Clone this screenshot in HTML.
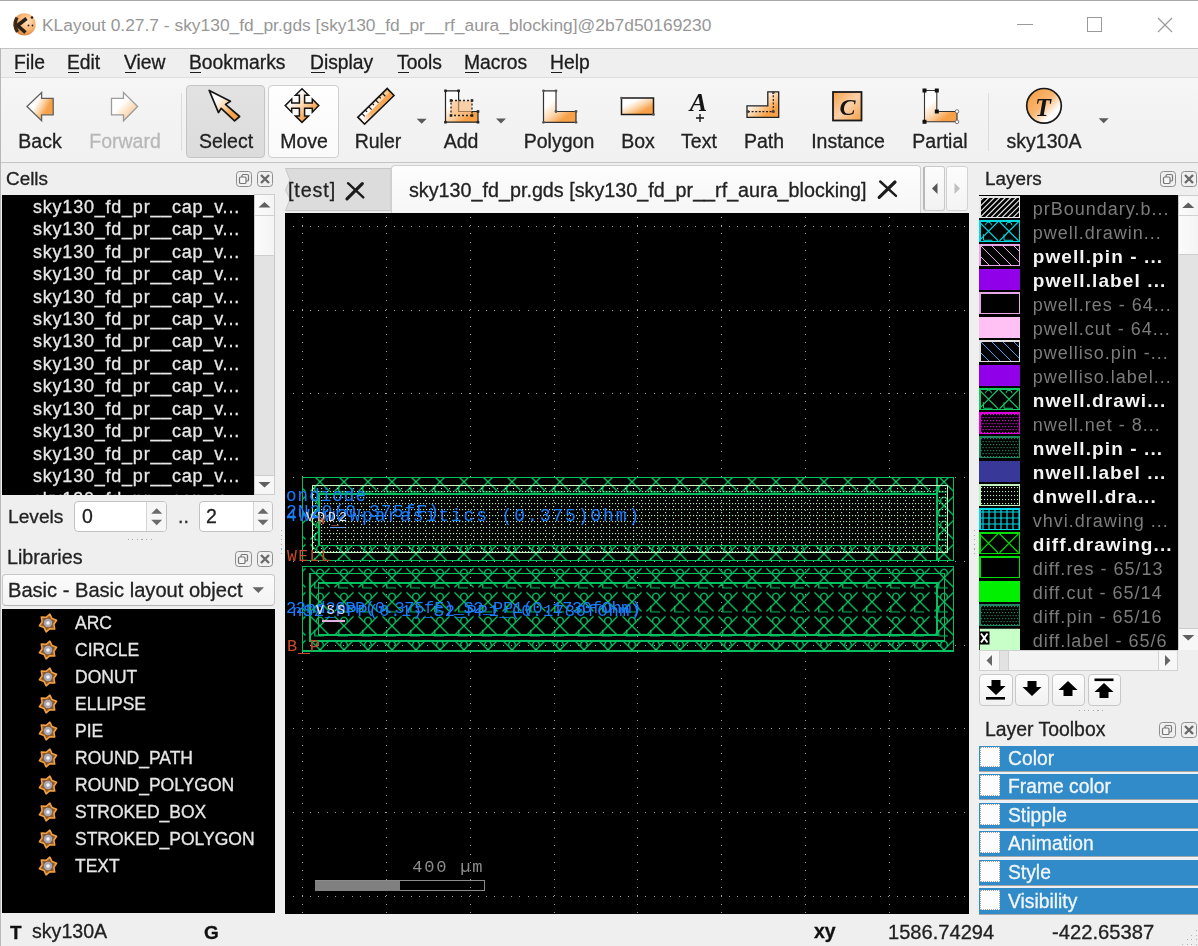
<!DOCTYPE html><html><head><meta charset="utf-8"><style>
html,body{margin:0;padding:0} body{width:1198px;height:946px;position:relative;overflow:hidden;background:#efefef;font-family:'Liberation Sans',sans-serif}
.a{position:absolute;box-sizing:border-box}
.t{position:absolute;white-space:pre;line-height:1;will-change:transform;-webkit-text-stroke:0.3px currentColor}
.sp{will-change:auto}
svg{position:absolute;overflow:visible;will-change:transform}
</style></head><body>
<div class="a" style="left:0px;top:0px;width:1198px;height:48px;background:#ffffff"></div>
<div class="a" style="left:0px;top:0px;width:1198px;height:1px;background:#a9a9a9"></div>
<div class="a" style="left:0px;top:48px;width:1198px;height:1px;background:#c4c4c4"></div>
<svg style="left:0;top:0" width="1" height="1">
<defs><radialGradient id="kball" cx="0.62" cy="0.38" r="0.7"><stop offset="0" stop-color="#ffe2c0"/><stop offset="0.55" stop-color="#f8b270"/><stop offset="1" stop-color="#d07a30"/></radialGradient></defs>
<circle cx="24.5" cy="24.4" r="11.2" fill="url(#kball)"/>
<path d="M26.5,18.5 L17.5,25.5 L25.5,32.5" fill="none" stroke="#2a2018" stroke-width="3.6" stroke-linejoin="round"/>
<path d="M17,17.5 Q13.2,24.5 17.5,32" fill="none" stroke="#3a2a1c" stroke-width="3.4"/>
<circle cx="32" cy="17.5" r="1.3" fill="#2a2018"/><circle cx="28.5" cy="25.5" r="0.9" fill="#2a2018"/><circle cx="32.5" cy="25.5" r="0.9" fill="#2a2018"/>
</svg>
<div class="t" style="left:42.0px;top:16.6px;font-size:17.4px;color:#979797;font-weight:400;letter-spacing:0px;will-change:auto;-webkit-text-stroke:0">KLayout 0.27.7 - sky130_fd_pr.gds [sky130_fd_pr__rf_aura_blocking]@2b7d50169230</div>
<div class="a" style="left:1017px;top:24px;width:16px;height:1px;background:#9a9a9a"></div>
<div class="a" style="left:1087px;top:17px;width:15px;height:15px;border:1.4px solid #9a9a9a"></div>
<svg style="left:1157px;top:17px" width="16" height="16" viewBox="0 0 16 16"><path d="M1 1 L15 15 M15 1 L1 15" stroke="#9a9a9a" stroke-width="1.2"/></svg>
<div class="a" style="left:0px;top:49px;width:1198px;height:28px;background:#efefef"></div>
<div class="a" style="left:0px;top:77px;width:1198px;height:1px;background:#dddddd"></div>
<div class="t" style="left:14.0px;top:52.5px;font-size:19.3px;color:#1c1c1c;font-weight:400;letter-spacing:0px;">File</div>
<div class="a" style="left:15.0px;top:71.5px;width:11px;height:1.6px;background:#1c1c1c"></div>
<div class="t" style="left:66.6px;top:52.5px;font-size:19.3px;color:#1c1c1c;font-weight:400;letter-spacing:0px;">Edit</div>
<div class="a" style="left:67.6px;top:71.5px;width:11px;height:1.6px;background:#1c1c1c"></div>
<div class="t" style="left:123.5px;top:52.5px;font-size:19.3px;color:#1c1c1c;font-weight:400;letter-spacing:0px;">View</div>
<div class="a" style="left:124.5px;top:71.5px;width:11px;height:1.6px;background:#1c1c1c"></div>
<div class="t" style="left:188.6px;top:52.5px;font-size:19.3px;color:#1c1c1c;font-weight:400;letter-spacing:0px;">Bookmarks</div>
<div class="a" style="left:189.6px;top:71.5px;width:11px;height:1.6px;background:#1c1c1c"></div>
<div class="t" style="left:310.3px;top:52.5px;font-size:19.3px;color:#1c1c1c;font-weight:400;letter-spacing:0px;">Display</div>
<div class="a" style="left:311.3px;top:71.5px;width:14px;height:1.6px;background:#1c1c1c"></div>
<div class="t" style="left:396.7px;top:52.5px;font-size:19.3px;color:#1c1c1c;font-weight:400;letter-spacing:0px;">Tools</div>
<div class="a" style="left:397.7px;top:71.5px;width:11px;height:1.6px;background:#1c1c1c"></div>
<div class="t" style="left:464.3px;top:52.5px;font-size:19.3px;color:#1c1c1c;font-weight:400;letter-spacing:0px;">Macros</div>
<div class="a" style="left:465.3px;top:71.5px;width:14px;height:1.6px;background:#1c1c1c"></div>
<div class="t" style="left:550.2px;top:52.5px;font-size:19.3px;color:#1c1c1c;font-weight:400;letter-spacing:0px;">Help</div>
<div class="a" style="left:551.2px;top:71.5px;width:11px;height:1.6px;background:#1c1c1c"></div>
<div class="a" style="left:0px;top:78px;width:1198px;height:84px;background:linear-gradient(#f6f6f6,#f3f3f3 40%,#f1f1f1)"></div>
<div class="a" style="left:0px;top:162px;width:1198px;height:1px;background:#c6c6c6"></div>
<div class="a" style="left:186px;top:84.5px;width:78.5px;height:73.5px;background:linear-gradient(#e2e2e2,#dcdcdc);border:1px solid #c4c4c4;border-radius:4px"></div>
<div class="a" style="left:267.5px;top:84.5px;width:71.5px;height:73.5px;background:linear-gradient(#fefefe,#fafafa);border:1px solid #cfcfcf;border-radius:4px"></div>
<div class="a" style="left:181px;top:93px;width:1px;height:58px;background:#dcdcdc"></div>
<div class="a" style="left:988px;top:93px;width:1px;height:58px;background:#dcdcdc"></div>
<svg style="left:0;top:0" width="1198" height="170" viewBox="0 0 1198 170"><defs><linearGradient id="gBack" x1="0.1" y1="0.2" x2="1" y2="0.7"><stop offset="0" stop-color="#ffffff"/><stop offset="0.28" stop-color="#ffffff"/><stop offset="0.5" stop-color="#fcd8b0"/><stop offset="0.75" stop-color="#f7a048"/><stop offset="1" stop-color="#f7a048"/></linearGradient><linearGradient id="gFwd" x1="0" y1="0" x2="1" y2="1"><stop offset="0" stop-color="#ffffff"/><stop offset="0.39" stop-color="#ffffff"/><stop offset="0.7" stop-color="#fcd8b0"/><stop offset="0.95" stop-color="#d8d8d8"/><stop offset="1" stop-color="#d8d8d8"/></linearGradient><linearGradient id="gO" x1="0" y1="0" x2="1" y2="1"><stop offset="0" stop-color="#ffffff"/><stop offset="0.28" stop-color="#ffffff"/><stop offset="0.5" stop-color="#fcd8b0"/><stop offset="0.75" stop-color="#f7a048"/><stop offset="1" stop-color="#f7a048"/></linearGradient><linearGradient id="gO2" x1="0" y1="0" x2="0.8" y2="1"><stop offset="0" stop-color="#ffffff"/><stop offset="0.33" stop-color="#ffffff"/><stop offset="0.6" stop-color="#fcd8b0"/><stop offset="0.85" stop-color="#f7a048"/><stop offset="1" stop-color="#f7a048"/></linearGradient><linearGradient id="gT" x1="0.1" y1="0.1" x2="0.9" y2="0.9"><stop offset="0" stop-color="#f7a048"/><stop offset="0.45" stop-color="#f9b570"/><stop offset="0.8" stop-color="#ffffff"/><stop offset="1" stop-color="#ffffff"/></linearGradient></defs><path d="M27,106.5 L41.6,92.5 L41.6,98.3 L53.2,98.3 L53.2,114.8 L41.6,114.8 L41.6,120.8 Z" fill="url(#gBack)" stroke="#606060" stroke-width="1.3" stroke-linejoin="miter"/><path d="M137.6,106.5 L123.5,92.5 L123.5,98.3 L111.5,98.3 L111.5,114.8 L123.5,114.8 L123.5,120.8 Z" fill="url(#gFwd)" stroke="#9c9c9c" stroke-width="1.3"/><path d="M209.2,90.4 L230.4,101.3 L225.5,104.4 L239.6,116.5 L234.6,120.8 L221.2,108.3 L218.5,112.6 Z" fill="url(#gO)" stroke="#151515" stroke-width="1.7" stroke-linejoin="round"/><path d="M302,88.8 L308.6,95.3 L304.6,95.3 L304.6,103.0 L312.3,103.0 L312.3,99.0 L318.8,105.6 L312.3,112.19999999999999 L312.3,108.19999999999999 L304.6,108.19999999999999 L304.6,115.89999999999999 L308.6,115.89999999999999 L302,122.39999999999999 L295.4,115.89999999999999 L299.4,115.89999999999999 L299.4,108.19999999999999 L291.7,108.19999999999999 L291.7,112.19999999999999 L285.2,105.6 L291.7,99.0 L291.7,103.0 L299.4,103.0 L299.4,95.3 L295.4,95.3 Z" fill="url(#gO)" stroke="#151515" stroke-width="1.5" stroke-linejoin="miter"/><g transform="translate(375.9,106.3) rotate(-44.3)"><rect x="-20.5" y="-4.8" width="41" height="9.6" fill="url(#gRul)" stroke="#151515" stroke-width="1.7"/><rect x="-19.6" y="-0.2" width="39.2" height="4.2" fill="url(#gRul2)"/><line x1="-15.0" y1="-4.8" x2="-15.0" y2="-0.5999999999999996" stroke="#151515" stroke-width="1.2"/><line x1="-10.2" y1="-4.8" x2="-10.2" y2="-2.1999999999999997" stroke="#151515" stroke-width="1.2"/><line x1="-5.4" y1="-4.8" x2="-5.4" y2="-0.5999999999999996" stroke="#151515" stroke-width="1.2"/><line x1="-0.6" y1="-4.8" x2="-0.6" y2="-2.1999999999999997" stroke="#151515" stroke-width="1.2"/><line x1="4.2" y1="-4.8" x2="4.2" y2="-0.5999999999999996" stroke="#151515" stroke-width="1.2"/><line x1="9.0" y1="-4.8" x2="9.0" y2="-2.1999999999999997" stroke="#151515" stroke-width="1.2"/><line x1="13.8" y1="-4.8" x2="13.8" y2="-0.5999999999999996" stroke="#151515" stroke-width="1.2"/></g><defs><linearGradient id="gRul" x1="0" y1="0" x2="1" y2="0"><stop offset="0" stop-color="#ffffff"/><stop offset="0.35" stop-color="#ffffff"/><stop offset="1" stop-color="#f8c080"/></linearGradient><linearGradient id="gRul2" x1="0" y1="0" x2="1" y2="0"><stop offset="0" stop-color="#ffffff"/><stop offset="0.3" stop-color="#f9b060"/><stop offset="1" stop-color="#f7a048"/></linearGradient></defs><path d="M416.7,118.7 L426.7,118.7 L421.7,123.7 Z" fill="#5a5a5a"/><path d="M496,118.5 L506,118.5 L501,123.5 Z" fill="#5a5a5a"/><path d="M1098.7,118.3 L1108.7,118.3 L1103.7,123.3 Z" fill="#5a5a5a"/><path d="M445.5,90.8 L458.6,90.8 L458.6,111.5 L478,111.5 L478,122.2 L445.5,122.2 Z" fill="url(#gO2)" stroke="#222" stroke-width="1.2"/><rect x="451" y="100.5" width="21" height="15" fill="#f8b878" fill-opacity="0.6" stroke="#222" stroke-width="1.3" stroke-dasharray="2 2"/><rect x="444.2" y="89.5" width="2.6" height="2.6" fill="#222"/><rect x="457.3" y="89.5" width="2.6" height="2.6" fill="#222"/><rect x="476.7" y="110.2" width="2.6" height="2.6" fill="#222"/><rect x="476.7" y="120.9" width="2.6" height="2.6" fill="#222"/><rect x="444.2" y="120.9" width="2.6" height="2.6" fill="#222"/><rect x="449.7" y="99.2" width="2.6" height="2.6" fill="#222"/><rect x="470.7" y="99.2" width="2.6" height="2.6" fill="#222"/><rect x="470.7" y="114.2" width="2.6" height="2.6" fill="#222"/><rect x="449.7" y="114.2" width="2.6" height="2.6" fill="#222"/><path d="M543.5,90.8 L556,90.8 L556,111.5 L576,111.5 L576,122.3 L543.5,122.3 Z" fill="url(#gO2)" stroke="#333" stroke-width="1.2"/><circle cx="543.5" cy="90.8" r="1.4" fill="#555"/><circle cx="556" cy="90.8" r="1.4" fill="#555"/><circle cx="556" cy="111.5" r="1.4" fill="#555"/><circle cx="576" cy="111.5" r="1.4" fill="#555"/><circle cx="576" cy="122.3" r="1.4" fill="#555"/><circle cx="543.5" cy="122.3" r="1.4" fill="#555"/><rect x="621.5" y="98" width="32" height="16.5" fill="url(#gO)" stroke="#1a1a1a" stroke-width="1.5"/><circle cx="621.5" cy="98" r="1.3" fill="#555"/><circle cx="653.5" cy="114.5" r="1.3" fill="#555"/><text x="698.5" y="111" font-family="Liberation Serif" font-style="italic" font-weight="700" font-size="26" text-anchor="middle" fill="#151515">A</text><path d="M696,118 L704,118 M700,114 L700,122" stroke="#151515" stroke-width="1.4"/><path d="M767.8,91.8 L778.7,91.8 L778.7,117.3 L747,117.3 L747,105.9 L767.8,105.9 Z" fill="url(#gO)" stroke="#222" stroke-width="1.3"/><path d="M748,111.6 L773.3,111.6 L773.3,92.5" fill="none" stroke="#222" stroke-width="1.2" stroke-dasharray="2 1.6"/><circle cx="773.3" cy="92.5" r="1.5" fill="#444"/><circle cx="773.3" cy="111.6" r="1.5" fill="#444"/><circle cx="748" cy="111.6" r="1.5" fill="#444"/><rect x="833" y="92" width="28.5" height="28.5" fill="url(#gInst)" stroke="#1a1a1a" stroke-width="1.8"/><defs><linearGradient id="gInst" x1="0" y1="0" x2="1" y2="1"><stop offset="0" stop-color="#f7a048"/><stop offset="0.5" stop-color="#fbd0a8"/><stop offset="1" stop-color="#f7a048"/></linearGradient></defs><text x="847.5" y="115" font-family="Liberation Serif" font-style="italic" font-weight="700" font-size="24" text-anchor="middle" fill="#151515">C</text><path d="M924.5,90.5 L936.8,90.5 L936.8,111.5 L957,111.5 L957,121.8 L924.5,121.8 Z" fill="url(#gO2)" stroke="#333" stroke-width="1.1"/><rect x="922.5" y="88.5" width="4" height="4" fill="#111"/><rect x="934.8" y="88.5" width="4" height="4" fill="#111"/><rect x="934.8" y="109.5" width="4" height="4" fill="#111"/><rect x="922.5" y="119.8" width="4" height="4" fill="#111"/><circle cx="957" cy="111.5" r="1.8" fill="#fff" stroke="#555" stroke-width="0.8"/><circle cx="957" cy="121.8" r="1.8" fill="#fff" stroke="#555" stroke-width="0.8"/><circle cx="1044" cy="105.8" r="17.3" fill="url(#gT)" stroke="#1a1a1a" stroke-width="1.7"/><text x="1043" y="115.5" font-family="Liberation Serif" font-style="italic" font-weight="700" font-size="26" text-anchor="middle" fill="#151515">T</text></svg>
<div class="t" style="left:-159.7px;width:400px;text-align:center;top:131.5px;font-size:19.5px;color:#222;font-weight:400;letter-spacing:0px;">Back</div>
<div class="t" style="left:-75.2px;width:400px;text-align:center;top:131.5px;font-size:19.5px;color:#b8b8b8;font-weight:400;letter-spacing:0px;">Forward</div>
<div class="t" style="left:26.0px;width:400px;text-align:center;top:131.5px;font-size:19.5px;color:#222;font-weight:400;letter-spacing:0px;">Select</div>
<div class="t" style="left:103.8px;width:400px;text-align:center;top:131.5px;font-size:19.5px;color:#222;font-weight:400;letter-spacing:0px;">Move</div>
<div class="t" style="left:177.5px;width:400px;text-align:center;top:131.5px;font-size:19.5px;color:#222;font-weight:400;letter-spacing:0px;">Ruler</div>
<div class="t" style="left:261.4px;width:400px;text-align:center;top:131.5px;font-size:19.5px;color:#222;font-weight:400;letter-spacing:0px;">Add</div>
<div class="t" style="left:358.9px;width:400px;text-align:center;top:131.5px;font-size:19.5px;color:#222;font-weight:400;letter-spacing:0px;">Polygon</div>
<div class="t" style="left:437.5px;width:400px;text-align:center;top:131.5px;font-size:19.5px;color:#222;font-weight:400;letter-spacing:0px;">Box</div>
<div class="t" style="left:499.4px;width:400px;text-align:center;top:131.5px;font-size:19.5px;color:#222;font-weight:400;letter-spacing:0px;">Text</div>
<div class="t" style="left:564.2px;width:400px;text-align:center;top:131.5px;font-size:19.5px;color:#222;font-weight:400;letter-spacing:0px;">Path</div>
<div class="t" style="left:647.6px;width:400px;text-align:center;top:131.5px;font-size:19.5px;color:#222;font-weight:400;letter-spacing:0px;">Instance</div>
<div class="t" style="left:740.2px;width:400px;text-align:center;top:131.5px;font-size:19.5px;color:#222;font-weight:400;letter-spacing:0px;">Partial</div>
<div class="t" style="left:843.6px;width:400px;text-align:center;top:131.5px;font-size:19.5px;color:#222;font-weight:400;letter-spacing:0px;">sky130A</div>
<div class="t" style="left:6.0px;top:169.5px;font-size:18.9px;color:#222;font-weight:400;letter-spacing:0px;">Cells</div>
<div class="a" style="left:235.7px;top:171px;width:16.2px;height:16.2px;border:1.2px solid #8e8e8e;border-radius:3.5px;background:#f0f0f0"></div>
<div class="a" style="left:256.7px;top:171px;width:16.2px;height:16.2px;border:1.2px solid #8e8e8e;border-radius:3.5px;background:#f0f0f0"></div>
<svg style="left:235.7px;top:171px" width="16" height="16" viewBox="0 0 16 16"><rect x="6" y="3.5" width="6.5" height="6.5" rx="1.3" fill="none" stroke="#777" stroke-width="1.2"/><rect x="3.5" y="6" width="6.5" height="6.5" rx="1.3" fill="#f6f6f6" stroke="#777" stroke-width="1.2"/></svg>
<svg style="left:256.7px;top:171px" width="16" height="16" viewBox="0 0 16 16"><path d="M4 4 L12 12 M12 4 L4 12" stroke="#6a6a6a" stroke-width="2.4"/></svg>
<div class="a" style="left:2px;top:195px;width:251.8px;height:299.6px;background:#000"></div>
<div class="a" style="left:2px;top:195px;width:251.8px;height:299.6px;overflow:hidden">
<div class="t" style="left:31px;top:2.9px;font-size:18px;letter-spacing:0.78px;color:#e8e8e8">sky130_fd_pr__cap_v...</div>
<div class="t" style="left:31px;top:25.3px;font-size:18px;letter-spacing:0.78px;color:#e8e8e8">sky130_fd_pr__cap_v...</div>
<div class="t" style="left:31px;top:47.7px;font-size:18px;letter-spacing:0.78px;color:#e8e8e8">sky130_fd_pr__cap_v...</div>
<div class="t" style="left:31px;top:70.2px;font-size:18px;letter-spacing:0.78px;color:#e8e8e8">sky130_fd_pr__cap_v...</div>
<div class="t" style="left:31px;top:92.6px;font-size:18px;letter-spacing:0.78px;color:#e8e8e8">sky130_fd_pr__cap_v...</div>
<div class="t" style="left:31px;top:115.0px;font-size:18px;letter-spacing:0.78px;color:#e8e8e8">sky130_fd_pr__cap_v...</div>
<div class="t" style="left:31px;top:137.4px;font-size:18px;letter-spacing:0.78px;color:#e8e8e8">sky130_fd_pr__cap_v...</div>
<div class="t" style="left:31px;top:159.9px;font-size:18px;letter-spacing:0.78px;color:#e8e8e8">sky130_fd_pr__cap_v...</div>
<div class="t" style="left:31px;top:182.3px;font-size:18px;letter-spacing:0.78px;color:#e8e8e8">sky130_fd_pr__cap_v...</div>
<div class="t" style="left:31px;top:204.7px;font-size:18px;letter-spacing:0.78px;color:#e8e8e8">sky130_fd_pr__cap_v...</div>
<div class="t" style="left:31px;top:227.2px;font-size:18px;letter-spacing:0.78px;color:#e8e8e8">sky130_fd_pr__cap_v...</div>
<div class="t" style="left:31px;top:249.6px;font-size:18px;letter-spacing:0.78px;color:#e8e8e8">sky130_fd_pr__cap_v...</div>
<div class="t" style="left:31px;top:272.0px;font-size:18px;letter-spacing:0.78px;color:#e8e8e8">sky130_fd_pr__cap_v...</div>
<div class="t" style="left:31px;top:294.5px;font-size:18px;letter-spacing:0.78px;color:#e8e8e8">sky130_fd_pr__cap_v...</div>
</div>
<div class="a" style="left:253.6px;top:194px;width:21.8px;height:300.6px;background:#e3e3e3;border:1px solid #c8c8c8"></div>
<div class="a" style="left:253.6px;top:194px;width:21.8px;height:61.599999999999994px;background:linear-gradient(90deg,#fbfbfb,#f4f4f4);border:1px solid #cdcdcd"></div>
<div class="a" style="left:253.6px;top:214.5px;width:21.8px;height:1px;background:#d2d2d2"></div>
<div class="a" style="left:253.6px;top:475px;width:21.8px;height:19.600000000000023px;background:#f7f7f7;border:1px solid #cdcdcd"></div>
<svg style="left:0;top:0" width="1" height="1"><path d="M258.5,207.5 L270.5,207.5 L264.5,202 Z" fill="#5f5f5f"/><path d="M258.5,482 L270.5,482 L264.5,487.5 Z" fill="#5f5f5f"/></svg>
<div class="t" style="left:8.0px;top:506.7px;font-size:19.2px;color:#222;font-weight:400;letter-spacing:0px;">Levels</div>
<div class="a" style="left:74.3px;top:500.7px;width:92.8px;height:31.19999999999999px;background:#fff;border:1px solid #c2c2c2;border-radius:4px"></div>
<div class="a" style="left:146.3px;top:501.7px;width:19.799999999999983px;height:29.19999999999999px;background:#f6f6f6;border-left:1px solid #d4d4d4;border-radius:0 3px 3px 0"></div>
<svg style="left:0;top:0" width="1" height="1"><path d="M151.2,513.7 L162.2,513.7 L156.7,508.2 Z" fill="#6a6a6a"/><path d="M151.2,519.7 L162.2,519.7 L156.7,525.2 Z" fill="#6a6a6a"/></svg>
<div class="t" style="left:81.8px;top:506.5px;font-size:19.5px;color:#222;font-weight:400;letter-spacing:0px;">0</div>
<div class="t" style="left:177.5px;top:506.5px;font-size:19.5px;color:#333;font-weight:400;letter-spacing:0px;">..</div>
<div class="a" style="left:198.7px;top:500.7px;width:74.69999999999999px;height:31.19999999999999px;background:#fff;border:1px solid #c2c2c2;border-radius:4px"></div>
<div class="a" style="left:252.5px;top:501.7px;width:19.899999999999977px;height:29.19999999999999px;background:#f6f6f6;border-left:1px solid #d4d4d4;border-radius:0 3px 3px 0"></div>
<svg style="left:0;top:0" width="1" height="1"><path d="M257.45,513.7 L268.45,513.7 L262.95,508.2 Z" fill="#6a6a6a"/><path d="M257.45,519.7 L268.45,519.7 L262.95,525.2 Z" fill="#6a6a6a"/></svg>
<div class="t" style="left:206.2px;top:506.5px;font-size:19.5px;color:#222;font-weight:400;letter-spacing:0px;">2</div>
<div class="a" style="left:127.6px;top:538.7px;width:1.2px;height:1.2px;background:#a8a8a8"></div>
<div class="a" style="left:132.2px;top:538.7px;width:1.2px;height:1.2px;background:#a8a8a8"></div>
<div class="a" style="left:136.79999999999998px;top:538.7px;width:1.2px;height:1.2px;background:#a8a8a8"></div>
<div class="a" style="left:141.4px;top:538.7px;width:1.2px;height:1.2px;background:#a8a8a8"></div>
<div class="a" style="left:146.0px;top:538.7px;width:1.2px;height:1.2px;background:#a8a8a8"></div>
<div class="a" style="left:150.6px;top:538.7px;width:1.2px;height:1.2px;background:#a8a8a8"></div>
<div class="t" style="left:7.0px;top:548.3px;font-size:19.7px;color:#222;font-weight:400;letter-spacing:0px;">Libraries</div>
<div class="a" style="left:235.4px;top:551px;width:16.2px;height:16.2px;border:1.2px solid #8e8e8e;border-radius:3.5px;background:#f0f0f0"></div>
<div class="a" style="left:256.9px;top:551px;width:16.2px;height:16.2px;border:1.2px solid #8e8e8e;border-radius:3.5px;background:#f0f0f0"></div>
<svg style="left:235.4px;top:551px" width="16" height="16" viewBox="0 0 16 16"><rect x="6" y="3.5" width="6.5" height="6.5" rx="1.3" fill="none" stroke="#777" stroke-width="1.2"/><rect x="3.5" y="6" width="6.5" height="6.5" rx="1.3" fill="#f6f6f6" stroke="#777" stroke-width="1.2"/></svg>
<svg style="left:256.9px;top:551px" width="16" height="16" viewBox="0 0 16 16"><path d="M4 4 L12 12 M12 4 L4 12" stroke="#6a6a6a" stroke-width="2.4"/></svg>
<div class="a" style="left:2px;top:573.6px;width:273.4px;height:32.6px;background:linear-gradient(#fbfbfb,#f3f3f3);border:1px solid #c8c8c8;border-bottom:1.5px solid #b4b4b4;border-radius:4px"></div>
<div class="t" style="left:8.0px;top:580.0px;font-size:20.1px;color:#222;font-weight:400;letter-spacing:0px;">Basic - Basic layout object</div>
<svg style="left:0;top:0" width="1" height="1"><path d="M252.5,587.3 L264,587.3 L258.3,593 Z" fill="#666"/></svg>
<div class="a" style="left:2px;top:609px;width:273.3px;height:304.3px;background:#000"></div>
<div class="t" style="left:75.0px;top:614.7px;font-size:17.5px;color:#e6e6e6;font-weight:400;letter-spacing:0px;">ARC</div>
<svg style="left:0;top:0" width="1" height="1"><polygon points="49.87,614.20 52.01,618.54 56.56,620.22 53.87,624.25 54.69,629.02 49.85,628.71 46.13,631.80 43.99,627.46 39.44,625.78 42.13,621.75 41.31,616.98 46.15,617.29" fill="#8a5a30" stroke="#f4a040" stroke-width="1.6" stroke-linejoin="round"/><circle cx="48" cy="623.0" r="4.2" fill="#a8a8b4"/><circle cx="48" cy="623.0" r="1.8" fill="#f4f4f8"/></svg>
<div class="t" style="left:75.0px;top:641.7px;font-size:17.5px;color:#e6e6e6;font-weight:400;letter-spacing:0px;">CIRCLE</div>
<svg style="left:0;top:0" width="1" height="1"><polygon points="49.87,641.20 52.01,645.54 56.56,647.22 53.87,651.25 54.69,656.02 49.85,655.71 46.13,658.80 43.99,654.46 39.44,652.78 42.13,648.75 41.31,643.98 46.15,644.29" fill="#8a5a30" stroke="#f4a040" stroke-width="1.6" stroke-linejoin="round"/><circle cx="48" cy="650.0" r="4.2" fill="#a8a8b4"/><circle cx="48" cy="650.0" r="1.8" fill="#f4f4f8"/></svg>
<div class="t" style="left:75.0px;top:668.7px;font-size:17.5px;color:#e6e6e6;font-weight:400;letter-spacing:0px;">DONUT</div>
<svg style="left:0;top:0" width="1" height="1"><polygon points="49.87,668.20 52.01,672.54 56.56,674.22 53.87,678.25 54.69,683.02 49.85,682.71 46.13,685.80 43.99,681.46 39.44,679.78 42.13,675.75 41.31,670.98 46.15,671.29" fill="#8a5a30" stroke="#f4a040" stroke-width="1.6" stroke-linejoin="round"/><circle cx="48" cy="677.0" r="4.2" fill="#a8a8b4"/><circle cx="48" cy="677.0" r="1.8" fill="#f4f4f8"/></svg>
<div class="t" style="left:75.0px;top:695.7px;font-size:17.5px;color:#e6e6e6;font-weight:400;letter-spacing:0px;">ELLIPSE</div>
<svg style="left:0;top:0" width="1" height="1"><polygon points="49.87,695.20 52.01,699.54 56.56,701.22 53.87,705.25 54.69,710.02 49.85,709.71 46.13,712.80 43.99,708.46 39.44,706.78 42.13,702.75 41.31,697.98 46.15,698.29" fill="#8a5a30" stroke="#f4a040" stroke-width="1.6" stroke-linejoin="round"/><circle cx="48" cy="704.0" r="4.2" fill="#a8a8b4"/><circle cx="48" cy="704.0" r="1.8" fill="#f4f4f8"/></svg>
<div class="t" style="left:75.0px;top:722.7px;font-size:17.5px;color:#e6e6e6;font-weight:400;letter-spacing:0px;">PIE</div>
<svg style="left:0;top:0" width="1" height="1"><polygon points="49.87,722.20 52.01,726.54 56.56,728.22 53.87,732.25 54.69,737.02 49.85,736.71 46.13,739.80 43.99,735.46 39.44,733.78 42.13,729.75 41.31,724.98 46.15,725.29" fill="#8a5a30" stroke="#f4a040" stroke-width="1.6" stroke-linejoin="round"/><circle cx="48" cy="731.0" r="4.2" fill="#a8a8b4"/><circle cx="48" cy="731.0" r="1.8" fill="#f4f4f8"/></svg>
<div class="t" style="left:75.0px;top:749.7px;font-size:17.5px;color:#e6e6e6;font-weight:400;letter-spacing:0px;">ROUND_PATH</div>
<svg style="left:0;top:0" width="1" height="1"><polygon points="49.87,749.20 52.01,753.54 56.56,755.22 53.87,759.25 54.69,764.02 49.85,763.71 46.13,766.80 43.99,762.46 39.44,760.78 42.13,756.75 41.31,751.98 46.15,752.29" fill="#8a5a30" stroke="#f4a040" stroke-width="1.6" stroke-linejoin="round"/><circle cx="48" cy="758.0" r="4.2" fill="#a8a8b4"/><circle cx="48" cy="758.0" r="1.8" fill="#f4f4f8"/></svg>
<div class="t" style="left:75.0px;top:776.7px;font-size:17.5px;color:#e6e6e6;font-weight:400;letter-spacing:0px;">ROUND_POLYGON</div>
<svg style="left:0;top:0" width="1" height="1"><polygon points="49.87,776.20 52.01,780.54 56.56,782.22 53.87,786.25 54.69,791.02 49.85,790.71 46.13,793.80 43.99,789.46 39.44,787.78 42.13,783.75 41.31,778.98 46.15,779.29" fill="#8a5a30" stroke="#f4a040" stroke-width="1.6" stroke-linejoin="round"/><circle cx="48" cy="785.0" r="4.2" fill="#a8a8b4"/><circle cx="48" cy="785.0" r="1.8" fill="#f4f4f8"/></svg>
<div class="t" style="left:75.0px;top:803.7px;font-size:17.5px;color:#e6e6e6;font-weight:400;letter-spacing:0px;">STROKED_BOX</div>
<svg style="left:0;top:0" width="1" height="1"><polygon points="49.87,803.20 52.01,807.54 56.56,809.22 53.87,813.25 54.69,818.02 49.85,817.71 46.13,820.80 43.99,816.46 39.44,814.78 42.13,810.75 41.31,805.98 46.15,806.29" fill="#8a5a30" stroke="#f4a040" stroke-width="1.6" stroke-linejoin="round"/><circle cx="48" cy="812.0" r="4.2" fill="#a8a8b4"/><circle cx="48" cy="812.0" r="1.8" fill="#f4f4f8"/></svg>
<div class="t" style="left:75.0px;top:830.7px;font-size:17.5px;color:#e6e6e6;font-weight:400;letter-spacing:0px;">STROKED_POLYGON</div>
<svg style="left:0;top:0" width="1" height="1"><polygon points="49.87,830.20 52.01,834.54 56.56,836.22 53.87,840.25 54.69,845.02 49.85,844.71 46.13,847.80 43.99,843.46 39.44,841.78 42.13,837.75 41.31,832.98 46.15,833.29" fill="#8a5a30" stroke="#f4a040" stroke-width="1.6" stroke-linejoin="round"/><circle cx="48" cy="839.0" r="4.2" fill="#a8a8b4"/><circle cx="48" cy="839.0" r="1.8" fill="#f4f4f8"/></svg>
<div class="t" style="left:75.0px;top:857.7px;font-size:17.5px;color:#e6e6e6;font-weight:400;letter-spacing:0px;">TEXT</div>
<svg style="left:0;top:0" width="1" height="1"><polygon points="49.87,857.20 52.01,861.54 56.56,863.22 53.87,867.25 54.69,872.02 49.85,871.71 46.13,874.80 43.99,870.46 39.44,868.78 42.13,864.75 41.31,859.98 46.15,860.29" fill="#8a5a30" stroke="#f4a040" stroke-width="1.6" stroke-linejoin="round"/><circle cx="48" cy="866.0" r="4.2" fill="#a8a8b4"/><circle cx="48" cy="866.0" r="1.8" fill="#f4f4f8"/></svg>
<div class="a" style="left:280.5px;top:530.0px;width:1.3px;height:1.3px;background:#a8a8a8"></div>
<div class="a" style="left:280.5px;top:534.6px;width:1.3px;height:1.3px;background:#a8a8a8"></div>
<div class="a" style="left:280.5px;top:539.2px;width:1.3px;height:1.3px;background:#a8a8a8"></div>
<div class="a" style="left:280.5px;top:543.8px;width:1.3px;height:1.3px;background:#a8a8a8"></div>
<div class="a" style="left:280.5px;top:548.4px;width:1.3px;height:1.3px;background:#a8a8a8"></div>
<div class="a" style="left:280.5px;top:553.0px;width:1.3px;height:1.3px;background:#a8a8a8"></div>
<svg style="left:0;top:0" width="1" height="1"><path d="M285.5,168.5 L391,168.5 L391,210.6 L285.5,210.6 L290,199 L285.5,190 L290,180 Z" fill="#dcdcdc" stroke="#c6c6c6" stroke-width="1"/></svg>
<div class="t" style="left:287.5px;top:181.3px;font-size:19.7px;color:#222;font-weight:400;letter-spacing:0.9px;">[test]</div>
<svg style="left:0;top:0" width="1" height="1"><path d="M347,198.9 L362.3,183.7" stroke="#1c1c1c" stroke-width="3.2" stroke-linecap="round"/><path d="M348,183.2 L363.3,197.4" stroke="#1c1c1c" stroke-width="2.4" stroke-linecap="round"/></svg>
<div class="a" style="left:391px;top:165px;width:530px;height:48px;background:linear-gradient(#fdfdfd,#f6f6f6);border:1px solid #cfcfcf;border-bottom:none;border-radius:4px 4px 0 0"></div>
<div class="t" style="left:408.6px;top:181.3px;font-size:19.74px;color:#222;font-weight:400;letter-spacing:0px;">sky130_fd_pr.gds [sky130_fd_pr__rf_aura_blocking]</div>
<svg style="left:0;top:0" width="1" height="1"><path d="M879.2,197.4 L895,182.0" stroke="#1c1c1c" stroke-width="3.2" stroke-linecap="round"/><path d="M880.2,181.5 L896,195.9" stroke="#1c1c1c" stroke-width="2.4" stroke-linecap="round"/></svg>
<div class="a" style="left:923px;top:165.5px;width:22px;height:45.7px;background:linear-gradient(#fcfcfc,#f2f2f2);border:1px solid #cacaca;border-left:2px solid #b8b8b8;border-radius:3px"></div>
<div class="a" style="left:946.4px;top:165.5px;width:21.3px;height:45.7px;background:linear-gradient(#fcfcfc,#f4f4f4);border:1px solid #d2d2d2;border-radius:3px"></div>
<svg style="left:0;top:0" width="1" height="1"><path d="M937.5,183 L937.5,194 L932,188.5 Z" fill="#555"/><path d="M954.5,183 L954.5,194 L960,188.5 Z" fill="#c0c0c0"/></svg>
<svg style="left:285px;top:213px" width="684" height="701" viewBox="285 213 684 701" shape-rendering="crispEdges"><defs><pattern id="pX" patternUnits="userSpaceOnUse" x="20" y="13.8" width="24" height="24"><g fill="none" stroke="#06cc66" stroke-width="1.2" shape-rendering="geometricPrecision"><path d="M2.5,2.5 L21.5,21.5 M21.5,2.5 L2.5,21.5"/><path d="M9,8 A3.3,3.3 0 1 1 15,8"/><path d="M6.8,16 L6.8,22 L16,22"/></g></pattern><pattern id="pD" patternUnits="userSpaceOnUse" x="0" y="497" width="3" height="6"><rect x="-0.15" y="-0.15" width="1.3" height="1.3" fill="#b8ecb8" shape-rendering="geometricPrecision"/></pattern><pattern id="pD2" patternUnits="userSpaceOnUse" x="1" y="500" width="8" height="6"><rect x="-0.15" y="-0.15" width="1.3" height="1.3" fill="#b8ecb8" shape-rendering="geometricPrecision"/></pattern><clipPath id="ringU"><path d="M302,477 H954 V560.5 H302 Z M319,494 V545.6 H937 V494 Z" clip-rule="evenodd"/></clipPath></defs><rect x="285" y="213" width="684" height="701" fill="#000"/><path d="M302,217h1v1h-1zM302,225h1v1h-1zM302,233h1v1h-1zM302,242h1v1h-1zM302,250h1v1h-1zM302,259h1v1h-1zM302,267h1v1h-1zM302,275h1v1h-1zM302,284h1v1h-1zM302,292h1v1h-1zM302,300h1v1h-1zM302,309h1v1h-1zM302,317h1v1h-1zM302,326h1v1h-1zM302,334h1v1h-1zM302,342h1v1h-1zM302,351h1v1h-1zM302,359h1v1h-1zM302,368h1v1h-1zM302,376h1v1h-1zM302,384h1v1h-1zM302,393h1v1h-1zM302,401h1v1h-1zM302,409h1v1h-1zM302,418h1v1h-1zM302,426h1v1h-1zM302,435h1v1h-1zM302,443h1v1h-1zM302,451h1v1h-1zM302,460h1v1h-1zM302,468h1v1h-1zM302,476h1v1h-1zM302,485h1v1h-1zM302,493h1v1h-1zM302,502h1v1h-1zM302,510h1v1h-1zM302,518h1v1h-1zM302,527h1v1h-1zM302,535h1v1h-1zM302,544h1v1h-1zM302,552h1v1h-1zM302,560h1v1h-1zM302,569h1v1h-1zM302,577h1v1h-1zM302,585h1v1h-1zM302,594h1v1h-1zM302,602h1v1h-1zM302,611h1v1h-1zM302,619h1v1h-1zM302,627h1v1h-1zM302,636h1v1h-1zM302,644h1v1h-1zM302,652h1v1h-1zM302,661h1v1h-1zM302,669h1v1h-1zM302,678h1v1h-1zM302,686h1v1h-1zM302,694h1v1h-1zM302,703h1v1h-1zM302,711h1v1h-1zM302,720h1v1h-1zM302,728h1v1h-1zM302,736h1v1h-1zM302,745h1v1h-1zM302,753h1v1h-1zM302,761h1v1h-1zM302,770h1v1h-1zM302,778h1v1h-1zM302,787h1v1h-1zM302,795h1v1h-1zM302,803h1v1h-1zM302,812h1v1h-1zM302,820h1v1h-1zM302,828h1v1h-1zM302,837h1v1h-1zM302,845h1v1h-1zM302,854h1v1h-1zM302,862h1v1h-1zM302,870h1v1h-1zM302,879h1v1h-1zM302,887h1v1h-1zM302,895h1v1h-1zM302,904h1v1h-1zM302,912h1v1h-1zM386,217h1v1h-1zM386,225h1v1h-1zM386,233h1v1h-1zM386,242h1v1h-1zM386,250h1v1h-1zM386,259h1v1h-1zM386,267h1v1h-1zM386,275h1v1h-1zM386,284h1v1h-1zM386,292h1v1h-1zM386,300h1v1h-1zM386,309h1v1h-1zM386,317h1v1h-1zM386,326h1v1h-1zM386,334h1v1h-1zM386,342h1v1h-1zM386,351h1v1h-1zM386,359h1v1h-1zM386,368h1v1h-1zM386,376h1v1h-1zM386,384h1v1h-1zM386,393h1v1h-1zM386,401h1v1h-1zM386,409h1v1h-1zM386,418h1v1h-1zM386,426h1v1h-1zM386,435h1v1h-1zM386,443h1v1h-1zM386,451h1v1h-1zM386,460h1v1h-1zM386,468h1v1h-1zM386,476h1v1h-1zM386,485h1v1h-1zM386,493h1v1h-1zM386,502h1v1h-1zM386,510h1v1h-1zM386,518h1v1h-1zM386,527h1v1h-1zM386,535h1v1h-1zM386,544h1v1h-1zM386,552h1v1h-1zM386,560h1v1h-1zM386,569h1v1h-1zM386,577h1v1h-1zM386,585h1v1h-1zM386,594h1v1h-1zM386,602h1v1h-1zM386,611h1v1h-1zM386,619h1v1h-1zM386,627h1v1h-1zM386,636h1v1h-1zM386,644h1v1h-1zM386,652h1v1h-1zM386,661h1v1h-1zM386,669h1v1h-1zM386,678h1v1h-1zM386,686h1v1h-1zM386,694h1v1h-1zM386,703h1v1h-1zM386,711h1v1h-1zM386,720h1v1h-1zM386,728h1v1h-1zM386,736h1v1h-1zM386,745h1v1h-1zM386,753h1v1h-1zM386,761h1v1h-1zM386,770h1v1h-1zM386,778h1v1h-1zM386,787h1v1h-1zM386,795h1v1h-1zM386,803h1v1h-1zM386,812h1v1h-1zM386,820h1v1h-1zM386,828h1v1h-1zM386,837h1v1h-1zM386,845h1v1h-1zM386,854h1v1h-1zM386,862h1v1h-1zM386,870h1v1h-1zM386,879h1v1h-1zM386,887h1v1h-1zM386,895h1v1h-1zM386,904h1v1h-1zM386,912h1v1h-1zM470,217h1v1h-1zM470,225h1v1h-1zM470,233h1v1h-1zM470,242h1v1h-1zM470,250h1v1h-1zM470,259h1v1h-1zM470,267h1v1h-1zM470,275h1v1h-1zM470,284h1v1h-1zM470,292h1v1h-1zM470,300h1v1h-1zM470,309h1v1h-1zM470,317h1v1h-1zM470,326h1v1h-1zM470,334h1v1h-1zM470,342h1v1h-1zM470,351h1v1h-1zM470,359h1v1h-1zM470,368h1v1h-1zM470,376h1v1h-1zM470,384h1v1h-1zM470,393h1v1h-1zM470,401h1v1h-1zM470,409h1v1h-1zM470,418h1v1h-1zM470,426h1v1h-1zM470,435h1v1h-1zM470,443h1v1h-1zM470,451h1v1h-1zM470,460h1v1h-1zM470,468h1v1h-1zM470,476h1v1h-1zM470,485h1v1h-1zM470,493h1v1h-1zM470,502h1v1h-1zM470,510h1v1h-1zM470,518h1v1h-1zM470,527h1v1h-1zM470,535h1v1h-1zM470,544h1v1h-1zM470,552h1v1h-1zM470,560h1v1h-1zM470,569h1v1h-1zM470,577h1v1h-1zM470,585h1v1h-1zM470,594h1v1h-1zM470,602h1v1h-1zM470,611h1v1h-1zM470,619h1v1h-1zM470,627h1v1h-1zM470,636h1v1h-1zM470,644h1v1h-1zM470,652h1v1h-1zM470,661h1v1h-1zM470,669h1v1h-1zM470,678h1v1h-1zM470,686h1v1h-1zM470,694h1v1h-1zM470,703h1v1h-1zM470,711h1v1h-1zM470,720h1v1h-1zM470,728h1v1h-1zM470,736h1v1h-1zM470,745h1v1h-1zM470,753h1v1h-1zM470,761h1v1h-1zM470,770h1v1h-1zM470,778h1v1h-1zM470,787h1v1h-1zM470,795h1v1h-1zM470,803h1v1h-1zM470,812h1v1h-1zM470,820h1v1h-1zM470,828h1v1h-1zM470,837h1v1h-1zM470,845h1v1h-1zM470,854h1v1h-1zM470,862h1v1h-1zM470,870h1v1h-1zM470,879h1v1h-1zM470,887h1v1h-1zM470,895h1v1h-1zM470,904h1v1h-1zM470,912h1v1h-1zM554,217h1v1h-1zM554,225h1v1h-1zM554,233h1v1h-1zM554,242h1v1h-1zM554,250h1v1h-1zM554,259h1v1h-1zM554,267h1v1h-1zM554,275h1v1h-1zM554,284h1v1h-1zM554,292h1v1h-1zM554,300h1v1h-1zM554,309h1v1h-1zM554,317h1v1h-1zM554,326h1v1h-1zM554,334h1v1h-1zM554,342h1v1h-1zM554,351h1v1h-1zM554,359h1v1h-1zM554,368h1v1h-1zM554,376h1v1h-1zM554,384h1v1h-1zM554,393h1v1h-1zM554,401h1v1h-1zM554,409h1v1h-1zM554,418h1v1h-1zM554,426h1v1h-1zM554,435h1v1h-1zM554,443h1v1h-1zM554,451h1v1h-1zM554,460h1v1h-1zM554,468h1v1h-1zM554,476h1v1h-1zM554,485h1v1h-1zM554,493h1v1h-1zM554,502h1v1h-1zM554,510h1v1h-1zM554,518h1v1h-1zM554,527h1v1h-1zM554,535h1v1h-1zM554,544h1v1h-1zM554,552h1v1h-1zM554,560h1v1h-1zM554,569h1v1h-1zM554,577h1v1h-1zM554,585h1v1h-1zM554,594h1v1h-1zM554,602h1v1h-1zM554,611h1v1h-1zM554,619h1v1h-1zM554,627h1v1h-1zM554,636h1v1h-1zM554,644h1v1h-1zM554,652h1v1h-1zM554,661h1v1h-1zM554,669h1v1h-1zM554,678h1v1h-1zM554,686h1v1h-1zM554,694h1v1h-1zM554,703h1v1h-1zM554,711h1v1h-1zM554,720h1v1h-1zM554,728h1v1h-1zM554,736h1v1h-1zM554,745h1v1h-1zM554,753h1v1h-1zM554,761h1v1h-1zM554,770h1v1h-1zM554,778h1v1h-1zM554,787h1v1h-1zM554,795h1v1h-1zM554,803h1v1h-1zM554,812h1v1h-1zM554,820h1v1h-1zM554,828h1v1h-1zM554,837h1v1h-1zM554,845h1v1h-1zM554,854h1v1h-1zM554,862h1v1h-1zM554,870h1v1h-1zM554,879h1v1h-1zM554,887h1v1h-1zM554,895h1v1h-1zM554,904h1v1h-1zM554,912h1v1h-1zM637,217h1v1h-1zM637,225h1v1h-1zM637,233h1v1h-1zM637,242h1v1h-1zM637,250h1v1h-1zM637,259h1v1h-1zM637,267h1v1h-1zM637,275h1v1h-1zM637,284h1v1h-1zM637,292h1v1h-1zM637,300h1v1h-1zM637,309h1v1h-1zM637,317h1v1h-1zM637,326h1v1h-1zM637,334h1v1h-1zM637,342h1v1h-1zM637,351h1v1h-1zM637,359h1v1h-1zM637,368h1v1h-1zM637,376h1v1h-1zM637,384h1v1h-1zM637,393h1v1h-1zM637,401h1v1h-1zM637,409h1v1h-1zM637,418h1v1h-1zM637,426h1v1h-1zM637,435h1v1h-1zM637,443h1v1h-1zM637,451h1v1h-1zM637,460h1v1h-1zM637,468h1v1h-1zM637,476h1v1h-1zM637,485h1v1h-1zM637,493h1v1h-1zM637,502h1v1h-1zM637,510h1v1h-1zM637,518h1v1h-1zM637,527h1v1h-1zM637,535h1v1h-1zM637,544h1v1h-1zM637,552h1v1h-1zM637,560h1v1h-1zM637,569h1v1h-1zM637,577h1v1h-1zM637,585h1v1h-1zM637,594h1v1h-1zM637,602h1v1h-1zM637,611h1v1h-1zM637,619h1v1h-1zM637,627h1v1h-1zM637,636h1v1h-1zM637,644h1v1h-1zM637,652h1v1h-1zM637,661h1v1h-1zM637,669h1v1h-1zM637,678h1v1h-1zM637,686h1v1h-1zM637,694h1v1h-1zM637,703h1v1h-1zM637,711h1v1h-1zM637,720h1v1h-1zM637,728h1v1h-1zM637,736h1v1h-1zM637,745h1v1h-1zM637,753h1v1h-1zM637,761h1v1h-1zM637,770h1v1h-1zM637,778h1v1h-1zM637,787h1v1h-1zM637,795h1v1h-1zM637,803h1v1h-1zM637,812h1v1h-1zM637,820h1v1h-1zM637,828h1v1h-1zM637,837h1v1h-1zM637,845h1v1h-1zM637,854h1v1h-1zM637,862h1v1h-1zM637,870h1v1h-1zM637,879h1v1h-1zM637,887h1v1h-1zM637,895h1v1h-1zM637,904h1v1h-1zM637,912h1v1h-1zM721,217h1v1h-1zM721,225h1v1h-1zM721,233h1v1h-1zM721,242h1v1h-1zM721,250h1v1h-1zM721,259h1v1h-1zM721,267h1v1h-1zM721,275h1v1h-1zM721,284h1v1h-1zM721,292h1v1h-1zM721,300h1v1h-1zM721,309h1v1h-1zM721,317h1v1h-1zM721,326h1v1h-1zM721,334h1v1h-1zM721,342h1v1h-1zM721,351h1v1h-1zM721,359h1v1h-1zM721,368h1v1h-1zM721,376h1v1h-1zM721,384h1v1h-1zM721,393h1v1h-1zM721,401h1v1h-1zM721,409h1v1h-1zM721,418h1v1h-1zM721,426h1v1h-1zM721,435h1v1h-1zM721,443h1v1h-1zM721,451h1v1h-1zM721,460h1v1h-1zM721,468h1v1h-1zM721,476h1v1h-1zM721,485h1v1h-1zM721,493h1v1h-1zM721,502h1v1h-1zM721,510h1v1h-1zM721,518h1v1h-1zM721,527h1v1h-1zM721,535h1v1h-1zM721,544h1v1h-1zM721,552h1v1h-1zM721,560h1v1h-1zM721,569h1v1h-1zM721,577h1v1h-1zM721,585h1v1h-1zM721,594h1v1h-1zM721,602h1v1h-1zM721,611h1v1h-1zM721,619h1v1h-1zM721,627h1v1h-1zM721,636h1v1h-1zM721,644h1v1h-1zM721,652h1v1h-1zM721,661h1v1h-1zM721,669h1v1h-1zM721,678h1v1h-1zM721,686h1v1h-1zM721,694h1v1h-1zM721,703h1v1h-1zM721,711h1v1h-1zM721,720h1v1h-1zM721,728h1v1h-1zM721,736h1v1h-1zM721,745h1v1h-1zM721,753h1v1h-1zM721,761h1v1h-1zM721,770h1v1h-1zM721,778h1v1h-1zM721,787h1v1h-1zM721,795h1v1h-1zM721,803h1v1h-1zM721,812h1v1h-1zM721,820h1v1h-1zM721,828h1v1h-1zM721,837h1v1h-1zM721,845h1v1h-1zM721,854h1v1h-1zM721,862h1v1h-1zM721,870h1v1h-1zM721,879h1v1h-1zM721,887h1v1h-1zM721,895h1v1h-1zM721,904h1v1h-1zM721,912h1v1h-1zM805,217h1v1h-1zM805,225h1v1h-1zM805,233h1v1h-1zM805,242h1v1h-1zM805,250h1v1h-1zM805,259h1v1h-1zM805,267h1v1h-1zM805,275h1v1h-1zM805,284h1v1h-1zM805,292h1v1h-1zM805,300h1v1h-1zM805,309h1v1h-1zM805,317h1v1h-1zM805,326h1v1h-1zM805,334h1v1h-1zM805,342h1v1h-1zM805,351h1v1h-1zM805,359h1v1h-1zM805,368h1v1h-1zM805,376h1v1h-1zM805,384h1v1h-1zM805,393h1v1h-1zM805,401h1v1h-1zM805,409h1v1h-1zM805,418h1v1h-1zM805,426h1v1h-1zM805,435h1v1h-1zM805,443h1v1h-1zM805,451h1v1h-1zM805,460h1v1h-1zM805,468h1v1h-1zM805,476h1v1h-1zM805,485h1v1h-1zM805,493h1v1h-1zM805,502h1v1h-1zM805,510h1v1h-1zM805,518h1v1h-1zM805,527h1v1h-1zM805,535h1v1h-1zM805,544h1v1h-1zM805,552h1v1h-1zM805,560h1v1h-1zM805,569h1v1h-1zM805,577h1v1h-1zM805,585h1v1h-1zM805,594h1v1h-1zM805,602h1v1h-1zM805,611h1v1h-1zM805,619h1v1h-1zM805,627h1v1h-1zM805,636h1v1h-1zM805,644h1v1h-1zM805,652h1v1h-1zM805,661h1v1h-1zM805,669h1v1h-1zM805,678h1v1h-1zM805,686h1v1h-1zM805,694h1v1h-1zM805,703h1v1h-1zM805,711h1v1h-1zM805,720h1v1h-1zM805,728h1v1h-1zM805,736h1v1h-1zM805,745h1v1h-1zM805,753h1v1h-1zM805,761h1v1h-1zM805,770h1v1h-1zM805,778h1v1h-1zM805,787h1v1h-1zM805,795h1v1h-1zM805,803h1v1h-1zM805,812h1v1h-1zM805,820h1v1h-1zM805,828h1v1h-1zM805,837h1v1h-1zM805,845h1v1h-1zM805,854h1v1h-1zM805,862h1v1h-1zM805,870h1v1h-1zM805,879h1v1h-1zM805,887h1v1h-1zM805,895h1v1h-1zM805,904h1v1h-1zM805,912h1v1h-1zM889,217h1v1h-1zM889,225h1v1h-1zM889,233h1v1h-1zM889,242h1v1h-1zM889,250h1v1h-1zM889,259h1v1h-1zM889,267h1v1h-1zM889,275h1v1h-1zM889,284h1v1h-1zM889,292h1v1h-1zM889,300h1v1h-1zM889,309h1v1h-1zM889,317h1v1h-1zM889,326h1v1h-1zM889,334h1v1h-1zM889,342h1v1h-1zM889,351h1v1h-1zM889,359h1v1h-1zM889,368h1v1h-1zM889,376h1v1h-1zM889,384h1v1h-1zM889,393h1v1h-1zM889,401h1v1h-1zM889,409h1v1h-1zM889,418h1v1h-1zM889,426h1v1h-1zM889,435h1v1h-1zM889,443h1v1h-1zM889,451h1v1h-1zM889,460h1v1h-1zM889,468h1v1h-1zM889,476h1v1h-1zM889,485h1v1h-1zM889,493h1v1h-1zM889,502h1v1h-1zM889,510h1v1h-1zM889,518h1v1h-1zM889,527h1v1h-1zM889,535h1v1h-1zM889,544h1v1h-1zM889,552h1v1h-1zM889,560h1v1h-1zM889,569h1v1h-1zM889,577h1v1h-1zM889,585h1v1h-1zM889,594h1v1h-1zM889,602h1v1h-1zM889,611h1v1h-1zM889,619h1v1h-1zM889,627h1v1h-1zM889,636h1v1h-1zM889,644h1v1h-1zM889,652h1v1h-1zM889,661h1v1h-1zM889,669h1v1h-1zM889,678h1v1h-1zM889,686h1v1h-1zM889,694h1v1h-1zM889,703h1v1h-1zM889,711h1v1h-1zM889,720h1v1h-1zM889,728h1v1h-1zM889,736h1v1h-1zM889,745h1v1h-1zM889,753h1v1h-1zM889,761h1v1h-1zM889,770h1v1h-1zM889,778h1v1h-1zM889,787h1v1h-1zM889,795h1v1h-1zM889,803h1v1h-1zM889,812h1v1h-1zM889,820h1v1h-1zM889,828h1v1h-1zM889,837h1v1h-1zM889,845h1v1h-1zM889,854h1v1h-1zM889,862h1v1h-1zM889,870h1v1h-1zM889,879h1v1h-1zM889,887h1v1h-1zM889,895h1v1h-1zM889,904h1v1h-1zM889,912h1v1h-1zM293,226h1v1h-1zM302,226h1v1h-1zM310,226h1v1h-1zM318,226h1v1h-1zM327,226h1v1h-1zM335,226h1v1h-1zM343,226h1v1h-1zM352,226h1v1h-1zM360,226h1v1h-1zM369,226h1v1h-1zM377,226h1v1h-1zM385,226h1v1h-1zM394,226h1v1h-1zM402,226h1v1h-1zM411,226h1v1h-1zM419,226h1v1h-1zM427,226h1v1h-1zM436,226h1v1h-1zM444,226h1v1h-1zM452,226h1v1h-1zM461,226h1v1h-1zM469,226h1v1h-1zM478,226h1v1h-1zM486,226h1v1h-1zM494,226h1v1h-1zM503,226h1v1h-1zM511,226h1v1h-1zM519,226h1v1h-1zM528,226h1v1h-1zM536,226h1v1h-1zM545,226h1v1h-1zM553,226h1v1h-1zM561,226h1v1h-1zM570,226h1v1h-1zM578,226h1v1h-1zM586,226h1v1h-1zM595,226h1v1h-1zM603,226h1v1h-1zM612,226h1v1h-1zM620,226h1v1h-1zM628,226h1v1h-1zM637,226h1v1h-1zM645,226h1v1h-1zM654,226h1v1h-1zM662,226h1v1h-1zM670,226h1v1h-1zM679,226h1v1h-1zM687,226h1v1h-1zM695,226h1v1h-1zM704,226h1v1h-1zM712,226h1v1h-1zM721,226h1v1h-1zM729,226h1v1h-1zM737,226h1v1h-1zM746,226h1v1h-1zM754,226h1v1h-1zM762,226h1v1h-1zM771,226h1v1h-1zM779,226h1v1h-1zM788,226h1v1h-1zM796,226h1v1h-1zM804,226h1v1h-1zM813,226h1v1h-1zM821,226h1v1h-1zM830,226h1v1h-1zM838,226h1v1h-1zM846,226h1v1h-1zM855,226h1v1h-1zM863,226h1v1h-1zM871,226h1v1h-1zM880,226h1v1h-1zM888,226h1v1h-1zM897,226h1v1h-1zM905,226h1v1h-1zM913,226h1v1h-1zM922,226h1v1h-1zM930,226h1v1h-1zM938,226h1v1h-1zM947,226h1v1h-1zM955,226h1v1h-1zM964,226h1v1h-1zM293,310h1v1h-1zM302,310h1v1h-1zM310,310h1v1h-1zM318,310h1v1h-1zM327,310h1v1h-1zM335,310h1v1h-1zM343,310h1v1h-1zM352,310h1v1h-1zM360,310h1v1h-1zM369,310h1v1h-1zM377,310h1v1h-1zM385,310h1v1h-1zM394,310h1v1h-1zM402,310h1v1h-1zM411,310h1v1h-1zM419,310h1v1h-1zM427,310h1v1h-1zM436,310h1v1h-1zM444,310h1v1h-1zM452,310h1v1h-1zM461,310h1v1h-1zM469,310h1v1h-1zM478,310h1v1h-1zM486,310h1v1h-1zM494,310h1v1h-1zM503,310h1v1h-1zM511,310h1v1h-1zM519,310h1v1h-1zM528,310h1v1h-1zM536,310h1v1h-1zM545,310h1v1h-1zM553,310h1v1h-1zM561,310h1v1h-1zM570,310h1v1h-1zM578,310h1v1h-1zM586,310h1v1h-1zM595,310h1v1h-1zM603,310h1v1h-1zM612,310h1v1h-1zM620,310h1v1h-1zM628,310h1v1h-1zM637,310h1v1h-1zM645,310h1v1h-1zM654,310h1v1h-1zM662,310h1v1h-1zM670,310h1v1h-1zM679,310h1v1h-1zM687,310h1v1h-1zM695,310h1v1h-1zM704,310h1v1h-1zM712,310h1v1h-1zM721,310h1v1h-1zM729,310h1v1h-1zM737,310h1v1h-1zM746,310h1v1h-1zM754,310h1v1h-1zM762,310h1v1h-1zM771,310h1v1h-1zM779,310h1v1h-1zM788,310h1v1h-1zM796,310h1v1h-1zM804,310h1v1h-1zM813,310h1v1h-1zM821,310h1v1h-1zM830,310h1v1h-1zM838,310h1v1h-1zM846,310h1v1h-1zM855,310h1v1h-1zM863,310h1v1h-1zM871,310h1v1h-1zM880,310h1v1h-1zM888,310h1v1h-1zM897,310h1v1h-1zM905,310h1v1h-1zM913,310h1v1h-1zM922,310h1v1h-1zM930,310h1v1h-1zM938,310h1v1h-1zM947,310h1v1h-1zM955,310h1v1h-1zM964,310h1v1h-1zM293,393h1v1h-1zM302,393h1v1h-1zM310,393h1v1h-1zM318,393h1v1h-1zM327,393h1v1h-1zM335,393h1v1h-1zM343,393h1v1h-1zM352,393h1v1h-1zM360,393h1v1h-1zM369,393h1v1h-1zM377,393h1v1h-1zM385,393h1v1h-1zM394,393h1v1h-1zM402,393h1v1h-1zM411,393h1v1h-1zM419,393h1v1h-1zM427,393h1v1h-1zM436,393h1v1h-1zM444,393h1v1h-1zM452,393h1v1h-1zM461,393h1v1h-1zM469,393h1v1h-1zM478,393h1v1h-1zM486,393h1v1h-1zM494,393h1v1h-1zM503,393h1v1h-1zM511,393h1v1h-1zM519,393h1v1h-1zM528,393h1v1h-1zM536,393h1v1h-1zM545,393h1v1h-1zM553,393h1v1h-1zM561,393h1v1h-1zM570,393h1v1h-1zM578,393h1v1h-1zM586,393h1v1h-1zM595,393h1v1h-1zM603,393h1v1h-1zM612,393h1v1h-1zM620,393h1v1h-1zM628,393h1v1h-1zM637,393h1v1h-1zM645,393h1v1h-1zM654,393h1v1h-1zM662,393h1v1h-1zM670,393h1v1h-1zM679,393h1v1h-1zM687,393h1v1h-1zM695,393h1v1h-1zM704,393h1v1h-1zM712,393h1v1h-1zM721,393h1v1h-1zM729,393h1v1h-1zM737,393h1v1h-1zM746,393h1v1h-1zM754,393h1v1h-1zM762,393h1v1h-1zM771,393h1v1h-1zM779,393h1v1h-1zM788,393h1v1h-1zM796,393h1v1h-1zM804,393h1v1h-1zM813,393h1v1h-1zM821,393h1v1h-1zM830,393h1v1h-1zM838,393h1v1h-1zM846,393h1v1h-1zM855,393h1v1h-1zM863,393h1v1h-1zM871,393h1v1h-1zM880,393h1v1h-1zM888,393h1v1h-1zM897,393h1v1h-1zM905,393h1v1h-1zM913,393h1v1h-1zM922,393h1v1h-1zM930,393h1v1h-1zM938,393h1v1h-1zM947,393h1v1h-1zM955,393h1v1h-1zM964,393h1v1h-1zM293,477h1v1h-1zM302,477h1v1h-1zM310,477h1v1h-1zM318,477h1v1h-1zM327,477h1v1h-1zM335,477h1v1h-1zM343,477h1v1h-1zM352,477h1v1h-1zM360,477h1v1h-1zM369,477h1v1h-1zM377,477h1v1h-1zM385,477h1v1h-1zM394,477h1v1h-1zM402,477h1v1h-1zM411,477h1v1h-1zM419,477h1v1h-1zM427,477h1v1h-1zM436,477h1v1h-1zM444,477h1v1h-1zM452,477h1v1h-1zM461,477h1v1h-1zM469,477h1v1h-1zM478,477h1v1h-1zM486,477h1v1h-1zM494,477h1v1h-1zM503,477h1v1h-1zM511,477h1v1h-1zM519,477h1v1h-1zM528,477h1v1h-1zM536,477h1v1h-1zM545,477h1v1h-1zM553,477h1v1h-1zM561,477h1v1h-1zM570,477h1v1h-1zM578,477h1v1h-1zM586,477h1v1h-1zM595,477h1v1h-1zM603,477h1v1h-1zM612,477h1v1h-1zM620,477h1v1h-1zM628,477h1v1h-1zM637,477h1v1h-1zM645,477h1v1h-1zM654,477h1v1h-1zM662,477h1v1h-1zM670,477h1v1h-1zM679,477h1v1h-1zM687,477h1v1h-1zM695,477h1v1h-1zM704,477h1v1h-1zM712,477h1v1h-1zM721,477h1v1h-1zM729,477h1v1h-1zM737,477h1v1h-1zM746,477h1v1h-1zM754,477h1v1h-1zM762,477h1v1h-1zM771,477h1v1h-1zM779,477h1v1h-1zM788,477h1v1h-1zM796,477h1v1h-1zM804,477h1v1h-1zM813,477h1v1h-1zM821,477h1v1h-1zM830,477h1v1h-1zM838,477h1v1h-1zM846,477h1v1h-1zM855,477h1v1h-1zM863,477h1v1h-1zM871,477h1v1h-1zM880,477h1v1h-1zM888,477h1v1h-1zM897,477h1v1h-1zM905,477h1v1h-1zM913,477h1v1h-1zM922,477h1v1h-1zM930,477h1v1h-1zM938,477h1v1h-1zM947,477h1v1h-1zM955,477h1v1h-1zM964,477h1v1h-1zM293,561h1v1h-1zM302,561h1v1h-1zM310,561h1v1h-1zM318,561h1v1h-1zM327,561h1v1h-1zM335,561h1v1h-1zM343,561h1v1h-1zM352,561h1v1h-1zM360,561h1v1h-1zM369,561h1v1h-1zM377,561h1v1h-1zM385,561h1v1h-1zM394,561h1v1h-1zM402,561h1v1h-1zM411,561h1v1h-1zM419,561h1v1h-1zM427,561h1v1h-1zM436,561h1v1h-1zM444,561h1v1h-1zM452,561h1v1h-1zM461,561h1v1h-1zM469,561h1v1h-1zM478,561h1v1h-1zM486,561h1v1h-1zM494,561h1v1h-1zM503,561h1v1h-1zM511,561h1v1h-1zM519,561h1v1h-1zM528,561h1v1h-1zM536,561h1v1h-1zM545,561h1v1h-1zM553,561h1v1h-1zM561,561h1v1h-1zM570,561h1v1h-1zM578,561h1v1h-1zM586,561h1v1h-1zM595,561h1v1h-1zM603,561h1v1h-1zM612,561h1v1h-1zM620,561h1v1h-1zM628,561h1v1h-1zM637,561h1v1h-1zM645,561h1v1h-1zM654,561h1v1h-1zM662,561h1v1h-1zM670,561h1v1h-1zM679,561h1v1h-1zM687,561h1v1h-1zM695,561h1v1h-1zM704,561h1v1h-1zM712,561h1v1h-1zM721,561h1v1h-1zM729,561h1v1h-1zM737,561h1v1h-1zM746,561h1v1h-1zM754,561h1v1h-1zM762,561h1v1h-1zM771,561h1v1h-1zM779,561h1v1h-1zM788,561h1v1h-1zM796,561h1v1h-1zM804,561h1v1h-1zM813,561h1v1h-1zM821,561h1v1h-1zM830,561h1v1h-1zM838,561h1v1h-1zM846,561h1v1h-1zM855,561h1v1h-1zM863,561h1v1h-1zM871,561h1v1h-1zM880,561h1v1h-1zM888,561h1v1h-1zM897,561h1v1h-1zM905,561h1v1h-1zM913,561h1v1h-1zM922,561h1v1h-1zM930,561h1v1h-1zM938,561h1v1h-1zM947,561h1v1h-1zM955,561h1v1h-1zM964,561h1v1h-1zM293,645h1v1h-1zM302,645h1v1h-1zM310,645h1v1h-1zM318,645h1v1h-1zM327,645h1v1h-1zM335,645h1v1h-1zM343,645h1v1h-1zM352,645h1v1h-1zM360,645h1v1h-1zM369,645h1v1h-1zM377,645h1v1h-1zM385,645h1v1h-1zM394,645h1v1h-1zM402,645h1v1h-1zM411,645h1v1h-1zM419,645h1v1h-1zM427,645h1v1h-1zM436,645h1v1h-1zM444,645h1v1h-1zM452,645h1v1h-1zM461,645h1v1h-1zM469,645h1v1h-1zM478,645h1v1h-1zM486,645h1v1h-1zM494,645h1v1h-1zM503,645h1v1h-1zM511,645h1v1h-1zM519,645h1v1h-1zM528,645h1v1h-1zM536,645h1v1h-1zM545,645h1v1h-1zM553,645h1v1h-1zM561,645h1v1h-1zM570,645h1v1h-1zM578,645h1v1h-1zM586,645h1v1h-1zM595,645h1v1h-1zM603,645h1v1h-1zM612,645h1v1h-1zM620,645h1v1h-1zM628,645h1v1h-1zM637,645h1v1h-1zM645,645h1v1h-1zM654,645h1v1h-1zM662,645h1v1h-1zM670,645h1v1h-1zM679,645h1v1h-1zM687,645h1v1h-1zM695,645h1v1h-1zM704,645h1v1h-1zM712,645h1v1h-1zM721,645h1v1h-1zM729,645h1v1h-1zM737,645h1v1h-1zM746,645h1v1h-1zM754,645h1v1h-1zM762,645h1v1h-1zM771,645h1v1h-1zM779,645h1v1h-1zM788,645h1v1h-1zM796,645h1v1h-1zM804,645h1v1h-1zM813,645h1v1h-1zM821,645h1v1h-1zM830,645h1v1h-1zM838,645h1v1h-1zM846,645h1v1h-1zM855,645h1v1h-1zM863,645h1v1h-1zM871,645h1v1h-1zM880,645h1v1h-1zM888,645h1v1h-1zM897,645h1v1h-1zM905,645h1v1h-1zM913,645h1v1h-1zM922,645h1v1h-1zM930,645h1v1h-1zM938,645h1v1h-1zM947,645h1v1h-1zM955,645h1v1h-1zM964,645h1v1h-1zM293,728h1v1h-1zM302,728h1v1h-1zM310,728h1v1h-1zM318,728h1v1h-1zM327,728h1v1h-1zM335,728h1v1h-1zM343,728h1v1h-1zM352,728h1v1h-1zM360,728h1v1h-1zM369,728h1v1h-1zM377,728h1v1h-1zM385,728h1v1h-1zM394,728h1v1h-1zM402,728h1v1h-1zM411,728h1v1h-1zM419,728h1v1h-1zM427,728h1v1h-1zM436,728h1v1h-1zM444,728h1v1h-1zM452,728h1v1h-1zM461,728h1v1h-1zM469,728h1v1h-1zM478,728h1v1h-1zM486,728h1v1h-1zM494,728h1v1h-1zM503,728h1v1h-1zM511,728h1v1h-1zM519,728h1v1h-1zM528,728h1v1h-1zM536,728h1v1h-1zM545,728h1v1h-1zM553,728h1v1h-1zM561,728h1v1h-1zM570,728h1v1h-1zM578,728h1v1h-1zM586,728h1v1h-1zM595,728h1v1h-1zM603,728h1v1h-1zM612,728h1v1h-1zM620,728h1v1h-1zM628,728h1v1h-1zM637,728h1v1h-1zM645,728h1v1h-1zM654,728h1v1h-1zM662,728h1v1h-1zM670,728h1v1h-1zM679,728h1v1h-1zM687,728h1v1h-1zM695,728h1v1h-1zM704,728h1v1h-1zM712,728h1v1h-1zM721,728h1v1h-1zM729,728h1v1h-1zM737,728h1v1h-1zM746,728h1v1h-1zM754,728h1v1h-1zM762,728h1v1h-1zM771,728h1v1h-1zM779,728h1v1h-1zM788,728h1v1h-1zM796,728h1v1h-1zM804,728h1v1h-1zM813,728h1v1h-1zM821,728h1v1h-1zM830,728h1v1h-1zM838,728h1v1h-1zM846,728h1v1h-1zM855,728h1v1h-1zM863,728h1v1h-1zM871,728h1v1h-1zM880,728h1v1h-1zM888,728h1v1h-1zM897,728h1v1h-1zM905,728h1v1h-1zM913,728h1v1h-1zM922,728h1v1h-1zM930,728h1v1h-1zM938,728h1v1h-1zM947,728h1v1h-1zM955,728h1v1h-1zM964,728h1v1h-1zM293,812h1v1h-1zM302,812h1v1h-1zM310,812h1v1h-1zM318,812h1v1h-1zM327,812h1v1h-1zM335,812h1v1h-1zM343,812h1v1h-1zM352,812h1v1h-1zM360,812h1v1h-1zM369,812h1v1h-1zM377,812h1v1h-1zM385,812h1v1h-1zM394,812h1v1h-1zM402,812h1v1h-1zM411,812h1v1h-1zM419,812h1v1h-1zM427,812h1v1h-1zM436,812h1v1h-1zM444,812h1v1h-1zM452,812h1v1h-1zM461,812h1v1h-1zM469,812h1v1h-1zM478,812h1v1h-1zM486,812h1v1h-1zM494,812h1v1h-1zM503,812h1v1h-1zM511,812h1v1h-1zM519,812h1v1h-1zM528,812h1v1h-1zM536,812h1v1h-1zM545,812h1v1h-1zM553,812h1v1h-1zM561,812h1v1h-1zM570,812h1v1h-1zM578,812h1v1h-1zM586,812h1v1h-1zM595,812h1v1h-1zM603,812h1v1h-1zM612,812h1v1h-1zM620,812h1v1h-1zM628,812h1v1h-1zM637,812h1v1h-1zM645,812h1v1h-1zM654,812h1v1h-1zM662,812h1v1h-1zM670,812h1v1h-1zM679,812h1v1h-1zM687,812h1v1h-1zM695,812h1v1h-1zM704,812h1v1h-1zM712,812h1v1h-1zM721,812h1v1h-1zM729,812h1v1h-1zM737,812h1v1h-1zM746,812h1v1h-1zM754,812h1v1h-1zM762,812h1v1h-1zM771,812h1v1h-1zM779,812h1v1h-1zM788,812h1v1h-1zM796,812h1v1h-1zM804,812h1v1h-1zM813,812h1v1h-1zM821,812h1v1h-1zM830,812h1v1h-1zM838,812h1v1h-1zM846,812h1v1h-1zM855,812h1v1h-1zM863,812h1v1h-1zM871,812h1v1h-1zM880,812h1v1h-1zM888,812h1v1h-1zM897,812h1v1h-1zM905,812h1v1h-1zM913,812h1v1h-1zM922,812h1v1h-1zM930,812h1v1h-1zM938,812h1v1h-1zM947,812h1v1h-1zM955,812h1v1h-1zM964,812h1v1h-1zM293,896h1v1h-1zM302,896h1v1h-1zM310,896h1v1h-1zM318,896h1v1h-1zM327,896h1v1h-1zM335,896h1v1h-1zM343,896h1v1h-1zM352,896h1v1h-1zM360,896h1v1h-1zM369,896h1v1h-1zM377,896h1v1h-1zM385,896h1v1h-1zM394,896h1v1h-1zM402,896h1v1h-1zM411,896h1v1h-1zM419,896h1v1h-1zM427,896h1v1h-1zM436,896h1v1h-1zM444,896h1v1h-1zM452,896h1v1h-1zM461,896h1v1h-1zM469,896h1v1h-1zM478,896h1v1h-1zM486,896h1v1h-1zM494,896h1v1h-1zM503,896h1v1h-1zM511,896h1v1h-1zM519,896h1v1h-1zM528,896h1v1h-1zM536,896h1v1h-1zM545,896h1v1h-1zM553,896h1v1h-1zM561,896h1v1h-1zM570,896h1v1h-1zM578,896h1v1h-1zM586,896h1v1h-1zM595,896h1v1h-1zM603,896h1v1h-1zM612,896h1v1h-1zM620,896h1v1h-1zM628,896h1v1h-1zM637,896h1v1h-1zM645,896h1v1h-1zM654,896h1v1h-1zM662,896h1v1h-1zM670,896h1v1h-1zM679,896h1v1h-1zM687,896h1v1h-1zM695,896h1v1h-1zM704,896h1v1h-1zM712,896h1v1h-1zM721,896h1v1h-1zM729,896h1v1h-1zM737,896h1v1h-1zM746,896h1v1h-1zM754,896h1v1h-1zM762,896h1v1h-1zM771,896h1v1h-1zM779,896h1v1h-1zM788,896h1v1h-1zM796,896h1v1h-1zM804,896h1v1h-1zM813,896h1v1h-1zM821,896h1v1h-1zM830,896h1v1h-1zM838,896h1v1h-1zM846,896h1v1h-1zM855,896h1v1h-1zM863,896h1v1h-1zM871,896h1v1h-1zM880,896h1v1h-1zM888,896h1v1h-1zM897,896h1v1h-1zM905,896h1v1h-1zM913,896h1v1h-1zM922,896h1v1h-1zM930,896h1v1h-1zM938,896h1v1h-1zM947,896h1v1h-1zM955,896h1v1h-1zM964,896h1v1h-1z" fill="#9c9c9c"/><rect x="302" y="477" width="652" height="83.5" fill="url(#pX)" clip-path="url(#ringU)"/><rect x="312" y="485" width="636" height="67.5" fill="url(#pD)"/><rect x="312" y="485" width="636" height="67.5" fill="url(#pD2)"/><rect x="302.5" y="477.5" width="651" height="83" fill="none" stroke="#00c060" stroke-width="1.6"/><line x1="937" y1="477.5" x2="937" y2="560.5" stroke="#00c060" stroke-width="1.4"/><rect x="319" y="494" width="618" height="51.6" fill="none" stroke="#00c060" stroke-width="1.6"/><rect x="312.5" y="485.5" width="635" height="67" fill="none" stroke="#c0f4c0" stroke-width="1.5"/><rect x="302" y="566" width="652" height="85" fill="url(#pX)"/><rect x="302.5" y="566.5" width="651" height="84.5" fill="none" stroke="#00c060" stroke-width="1.6"/><rect x="309.7" y="573.6" width="634.8" height="67.4" fill="none" stroke="#00c060" stroke-width="1.6"/><rect x="318.4" y="583" width="618.6" height="52" fill="none" stroke="#00c060" stroke-width="1.6"/><text x="286" y="500.5" font-family="'Liberation Mono',monospace" font-size="17.5" fill="#1a7cff" letter-spacing="1.07" shape-rendering="geometricPrecision">ondiode</text><text x="286" y="517" font-family="'Liberation Mono',monospace" font-size="18" fill="#1a7cff" letter-spacing="1.05" shape-rendering="geometricPrecision">2N20(0.375fF)</text><text x="286" y="520.5" font-family="'Liberation Mono',monospace" font-size="18" fill="#1a7cff" letter-spacing="1.88" shape-rendering="geometricPrecision">4W4w2Wparasitics (0.375)0hm)</text><text x="287" y="560.5" font-family="'Liberation Mono',monospace" font-size="16.5" fill="#c84a28" letter-spacing="1.35" shape-rendering="geometricPrecision">WELL</text><text x="286" y="613" font-family="'Liberation Mono',monospace" font-size="17" fill="#1a7cff" letter-spacing="-0.34" shape-rendering="geometricPrecision">22nd20PP(0.375fF)_S2_PP1(0.1730fOhm)</text><text x="292" y="615.5" font-family="'Liberation Mono',monospace" font-size="17" fill="#1a7cff" letter-spacing="0.71" shape-rendering="geometricPrecision">nS2_PPP(0.1)_S2_PP1_(0.1730fOhm)</text><text x="287" y="651" font-family="'Liberation Mono',monospace" font-size="17" fill="#c84a28" letter-spacing="1.13" shape-rendering="geometricPrecision">B P</text><line x1="298" y1="653.3" x2="310" y2="653.3" stroke="#c84a28" stroke-width="1"/><text x="306" y="521" font-family="'Liberation Mono',monospace" font-size="13" fill="#e8e4f4" letter-spacing="3.2" shape-rendering="geometricPrecision">VDD2</text><text x="318" y="524" font-family="'Liberation Mono',monospace" font-size="12" fill="#c86a40" letter-spacing="6.3" shape-rendering="geometricPrecision">W_</text><line x1="330" y1="527" x2="345" y2="527" stroke="#6aa0ff" stroke-width="1"/><text x="316" y="614" font-family="'Liberation Mono',monospace" font-size="13" fill="#ece4f4" letter-spacing="2.87" shape-rendering="geometricPrecision">VSS</text><line x1="322" y1="621" x2="345" y2="621" stroke="#e0b0e0" stroke-width="1.2"/><rect x="315" y="880.5" width="169.5" height="10" fill="none" stroke="#8c8c8c" stroke-width="1"/><rect x="315" y="880.5" width="85.2" height="10" fill="#808080"/><text x="412.2" y="871.7" font-family="'Liberation Mono',monospace" font-size="17" fill="#8c8c8c" letter-spacing="1.8" shape-rendering="geometricPrecision">400 µm</text></svg>
<div class="t" style="left:985.0px;top:170.0px;font-size:18.9px;color:#222;font-weight:400;letter-spacing:0px;">Layers</div>
<div class="a" style="left:1159.7px;top:171px;width:16.2px;height:16.2px;border:1.2px solid #8e8e8e;border-radius:3.5px;background:#f0f0f0"></div>
<div class="a" style="left:1181px;top:171px;width:16.2px;height:16.2px;border:1.2px solid #8e8e8e;border-radius:3.5px;background:#f0f0f0"></div>
<svg style="left:1159.7px;top:171px" width="16" height="16" viewBox="0 0 16 16"><rect x="6" y="3.5" width="6.5" height="6.5" rx="1.3" fill="none" stroke="#777" stroke-width="1.2"/><rect x="3.5" y="6" width="6.5" height="6.5" rx="1.3" fill="#f6f6f6" stroke="#777" stroke-width="1.2"/></svg>
<svg style="left:1181px;top:171px" width="16" height="16" viewBox="0 0 16 16"><path d="M4 4 L12 12 M12 4 L4 12" stroke="#6a6a6a" stroke-width="2.4"/></svg>
<div class="a" style="left:979px;top:195px;width:199px;height:455px;background:#000"></div>
<div class="a" style="left:1178px;top:194.5px;width:20.5px;height:456px;background:#e3e3e3;border:1px solid #c8c8c8"></div>
<div class="a" style="left:1178px;top:194.5px;width:20.5px;height:60.5px;background:linear-gradient(90deg,#fbfbfb,#f4f4f4);border:1px solid #cdcdcd"></div>
<div class="a" style="left:1178px;top:215.0px;width:20.5px;height:1px;background:#d2d2d2"></div>
<div class="a" style="left:1178px;top:628px;width:20.5px;height:22.5px;background:#f7f7f7;border:1px solid #cdcdcd"></div>
<svg style="left:0;top:0" width="1" height="1"><path d="M1182.25,208.0 L1194.25,208.0 L1188.25,202.5 Z" fill="#5f5f5f"/><path d="M1182.25,635 L1194.25,635 L1188.25,640.5 Z" fill="#5f5f5f"/></svg>
<svg style="left:0;top:0" width="1" height="1" shape-rendering="crispEdges"><defs><clipPath id="listclip"><rect x="979" y="195" width="199" height="455"/></clipPath></defs><g clip-path="url(#listclip)"><clipPath id="sc0"><rect x="979.5" y="196.5" width="40.5" height="21.5"/></clipPath><g clip-path="url(#sc0)" shape-rendering="geometricPrecision"><line x1="963.0" y1="218.0" x2="984.5" y2="196.5" stroke="#e8e8e8" stroke-width="1.1"/><line x1="968.5" y1="218.0" x2="990.0" y2="196.5" stroke="#e8e8e8" stroke-width="1.1"/><line x1="974.0" y1="218.0" x2="995.5" y2="196.5" stroke="#e8e8e8" stroke-width="1.1"/><line x1="979.5" y1="218.0" x2="1001.0" y2="196.5" stroke="#e8e8e8" stroke-width="1.1"/><line x1="985.0" y1="218.0" x2="1006.5" y2="196.5" stroke="#e8e8e8" stroke-width="1.1"/><line x1="990.5" y1="218.0" x2="1012.0" y2="196.5" stroke="#e8e8e8" stroke-width="1.1"/><line x1="996.0" y1="218.0" x2="1017.5" y2="196.5" stroke="#e8e8e8" stroke-width="1.1"/><line x1="1001.5" y1="218.0" x2="1023.0" y2="196.5" stroke="#e8e8e8" stroke-width="1.1"/><line x1="1007.0" y1="218.0" x2="1028.5" y2="196.5" stroke="#e8e8e8" stroke-width="1.1"/><line x1="1012.5" y1="218.0" x2="1034.0" y2="196.5" stroke="#e8e8e8" stroke-width="1.1"/><line x1="1018.0" y1="218.0" x2="1039.5" y2="196.5" stroke="#e8e8e8" stroke-width="1.1"/><line x1="1023.5" y1="218.0" x2="1045.0" y2="196.5" stroke="#e8e8e8" stroke-width="1.1"/><line x1="1029.0" y1="218.0" x2="1050.5" y2="196.5" stroke="#e8e8e8" stroke-width="1.1"/><line x1="1034.5" y1="218.0" x2="1056.0" y2="196.5" stroke="#e8e8e8" stroke-width="1.1"/><line x1="1040.0" y1="218.0" x2="1061.5" y2="196.5" stroke="#e8e8e8" stroke-width="1.1"/></g><rect x="980.1" y="197.1" width="39.3" height="20.3" fill="none" stroke="#e8e8e8" stroke-width="1.3"/><text x="1032.7" y="214.6" font-family="Liberation Sans" font-size="18" font-weight="400" letter-spacing="1.0" fill="#7c7c7c" shape-rendering="geometricPrecision">prBoundary.b...</text><clipPath id="sc1"><rect x="979.5" y="220.5" width="40.5" height="21.5"/></clipPath><g clip-path="url(#sc1)" shape-rendering="geometricPrecision"><path d="M979.0,221.75 L998.0,240.75 M998.0,221.75 L979.0,240.75" stroke="#00d8e0" stroke-width="1.1"/><path d="M985.5,225.25 A3,3 0 1 1 991.5,225.25" fill="none" stroke="#00d8e0" stroke-width="1"/><path d="M983.5,234.25 L983.5,240.25 L992.5,240.25" fill="none" stroke="#00d8e0" stroke-width="1"/><path d="M999.5,221.75 L1018.5,240.75 M1018.5,221.75 L999.5,240.75" stroke="#00d8e0" stroke-width="1.1"/><path d="M1006.0,225.25 A3,3 0 1 1 1012.0,225.25" fill="none" stroke="#00d8e0" stroke-width="1"/><path d="M1004.0,234.25 L1004.0,240.25 L1013.0,240.25" fill="none" stroke="#00d8e0" stroke-width="1"/></g><rect x="980.1" y="221.1" width="39.3" height="20.3" fill="none" stroke="#00d8e0" stroke-width="1.3"/><text x="1032.7" y="238.6" font-family="Liberation Sans" font-size="18" font-weight="400" letter-spacing="1.0" fill="#7c7c7c" shape-rendering="geometricPrecision">pwell.drawin...</text><clipPath id="sc2"><rect x="979.5" y="244.5" width="40.5" height="21.5"/></clipPath><g clip-path="url(#sc2)" shape-rendering="geometricPrecision"><line x1="935.5" y1="244.5" x2="957.0" y2="266.0" stroke="#e8a8e8" stroke-width="1"/><line x1="946.5" y1="244.5" x2="968.0" y2="266.0" stroke="#e8a8e8" stroke-width="1"/><line x1="957.5" y1="244.5" x2="979.0" y2="266.0" stroke="#e8a8e8" stroke-width="1"/><line x1="968.5" y1="244.5" x2="990.0" y2="266.0" stroke="#e8a8e8" stroke-width="1"/><line x1="979.5" y1="244.5" x2="1001.0" y2="266.0" stroke="#e8a8e8" stroke-width="1"/><line x1="990.5" y1="244.5" x2="1012.0" y2="266.0" stroke="#e8a8e8" stroke-width="1"/><line x1="1001.5" y1="244.5" x2="1023.0" y2="266.0" stroke="#e8a8e8" stroke-width="1"/><line x1="1012.5" y1="244.5" x2="1034.0" y2="266.0" stroke="#e8a8e8" stroke-width="1"/><line x1="1023.5" y1="244.5" x2="1045.0" y2="266.0" stroke="#e8a8e8" stroke-width="1"/><line x1="1034.5" y1="244.5" x2="1056.0" y2="266.0" stroke="#e8a8e8" stroke-width="1"/><line x1="1045.5" y1="244.5" x2="1067.0" y2="266.0" stroke="#e8a8e8" stroke-width="1"/><line x1="1056.5" y1="244.5" x2="1078.0" y2="266.0" stroke="#e8a8e8" stroke-width="1"/></g><rect x="980.1" y="245.1" width="39.3" height="20.3" fill="none" stroke="#e8a8e8" stroke-width="1.3"/><text x="1032.7" y="262.6" font-family="Liberation Sans" font-size="19" font-weight="700" letter-spacing="1.1" fill="#f4f4f4" shape-rendering="geometricPrecision">pwell.pin - ...</text><rect x="979.0" y="268.5" width="41.0" height="21.5" fill="#9000e8"/><text x="1032.7" y="286.6" font-family="Liberation Sans" font-size="19" font-weight="700" letter-spacing="1.1" fill="#f4f4f4" shape-rendering="geometricPrecision">pwell.label ...</text><clipPath id="sc4"><rect x="979.5" y="292.5" width="40.5" height="21.5"/></clipPath><g clip-path="url(#sc4)" shape-rendering="geometricPrecision"></g><rect x="980.1" y="293.1" width="39.3" height="20.3" fill="none" stroke="#e8a8e8" stroke-width="1.3"/><text x="1032.7" y="310.6" font-family="Liberation Sans" font-size="18" font-weight="400" letter-spacing="1.0" fill="#7c7c7c" shape-rendering="geometricPrecision">pwell.res - 64...</text><rect x="979.0" y="316.5" width="41.0" height="21.5" fill="#ffc0f4"/><text x="1032.7" y="334.6" font-family="Liberation Sans" font-size="18" font-weight="400" letter-spacing="1.0" fill="#7c7c7c" shape-rendering="geometricPrecision">pwell.cut - 64...</text><clipPath id="sc6"><rect x="979.5" y="340.5" width="40.5" height="21.5"/></clipPath><g clip-path="url(#sc6)" shape-rendering="geometricPrecision"><line x1="935.5" y1="340.5" x2="957.0" y2="362.0" stroke="#40a0f0" stroke-width="1"/><line x1="946.5" y1="340.5" x2="968.0" y2="362.0" stroke="#40a0f0" stroke-width="1"/><line x1="957.5" y1="340.5" x2="979.0" y2="362.0" stroke="#40a0f0" stroke-width="1"/><line x1="968.5" y1="340.5" x2="990.0" y2="362.0" stroke="#40a0f0" stroke-width="1"/><line x1="979.5" y1="340.5" x2="1001.0" y2="362.0" stroke="#40a0f0" stroke-width="1"/><line x1="990.5" y1="340.5" x2="1012.0" y2="362.0" stroke="#40a0f0" stroke-width="1"/><line x1="1001.5" y1="340.5" x2="1023.0" y2="362.0" stroke="#40a0f0" stroke-width="1"/><line x1="1012.5" y1="340.5" x2="1034.0" y2="362.0" stroke="#40a0f0" stroke-width="1"/><line x1="1023.5" y1="340.5" x2="1045.0" y2="362.0" stroke="#40a0f0" stroke-width="1"/><line x1="1034.5" y1="340.5" x2="1056.0" y2="362.0" stroke="#40a0f0" stroke-width="1"/><line x1="1045.5" y1="340.5" x2="1067.0" y2="362.0" stroke="#40a0f0" stroke-width="1"/><line x1="1056.5" y1="340.5" x2="1078.0" y2="362.0" stroke="#40a0f0" stroke-width="1"/></g><rect x="980.1" y="341.1" width="39.3" height="20.3" fill="none" stroke="#e0e0e0" stroke-width="1.3"/><text x="1032.7" y="358.6" font-family="Liberation Sans" font-size="18" font-weight="400" letter-spacing="1.0" fill="#7c7c7c" shape-rendering="geometricPrecision">pwelliso.pin -...</text><rect x="979.0" y="364.5" width="41.0" height="21.5" fill="#9000e8"/><text x="1032.7" y="382.6" font-family="Liberation Sans" font-size="18" font-weight="400" letter-spacing="1.0" fill="#7c7c7c" shape-rendering="geometricPrecision">pwelliso.label...</text><clipPath id="sc8"><rect x="979.5" y="388.5" width="40.5" height="21.5"/></clipPath><g clip-path="url(#sc8)" shape-rendering="geometricPrecision"><path d="M979.0,389.75 L998.0,408.75 M998.0,389.75 L979.0,408.75" stroke="#14c864" stroke-width="1.1"/><path d="M985.5,393.25 A3,3 0 1 1 991.5,393.25" fill="none" stroke="#14c864" stroke-width="1"/><path d="M983.5,402.25 L983.5,408.25 L992.5,408.25" fill="none" stroke="#14c864" stroke-width="1"/><path d="M999.5,389.75 L1018.5,408.75 M1018.5,389.75 L999.5,408.75" stroke="#14c864" stroke-width="1.1"/><path d="M1006.0,393.25 A3,3 0 1 1 1012.0,393.25" fill="none" stroke="#14c864" stroke-width="1"/><path d="M1004.0,402.25 L1004.0,408.25 L1013.0,408.25" fill="none" stroke="#14c864" stroke-width="1"/></g><rect x="980.1" y="389.1" width="39.3" height="20.3" fill="none" stroke="#14c864" stroke-width="1.3"/><text x="1032.7" y="406.6" font-family="Liberation Sans" font-size="19" font-weight="700" letter-spacing="1.1" fill="#f4f4f4" shape-rendering="geometricPrecision">nwell.drawi...</text><clipPath id="sc9"><rect x="979.5" y="412.5" width="40.5" height="21.5"/></clipPath><g clip-path="url(#sc9)" shape-rendering="geometricPrecision"><rect x="981" y="414" width="1.2" height="1.2" fill="#e000e0"/><rect x="984" y="414" width="1.2" height="1.2" fill="#e000e0"/><rect x="987" y="414" width="1.2" height="1.2" fill="#e000e0"/><rect x="990" y="414" width="1.2" height="1.2" fill="#e000e0"/><rect x="993" y="414" width="1.2" height="1.2" fill="#e000e0"/><rect x="996" y="414" width="1.2" height="1.2" fill="#e000e0"/><rect x="999" y="414" width="1.2" height="1.2" fill="#e000e0"/><rect x="1002" y="414" width="1.2" height="1.2" fill="#e000e0"/><rect x="1005" y="414" width="1.2" height="1.2" fill="#e000e0"/><rect x="1008" y="414" width="1.2" height="1.2" fill="#e000e0"/><rect x="1011" y="414" width="1.2" height="1.2" fill="#e000e0"/><rect x="1014" y="414" width="1.2" height="1.2" fill="#e000e0"/><rect x="1017" y="414" width="1.2" height="1.2" fill="#e000e0"/><rect x="982.5" y="417" width="1.2" height="1.2" fill="#e000e0"/><rect x="985.5" y="417" width="1.2" height="1.2" fill="#e000e0"/><rect x="988.5" y="417" width="1.2" height="1.2" fill="#e000e0"/><rect x="991.5" y="417" width="1.2" height="1.2" fill="#e000e0"/><rect x="994.5" y="417" width="1.2" height="1.2" fill="#e000e0"/><rect x="997.5" y="417" width="1.2" height="1.2" fill="#e000e0"/><rect x="1000.5" y="417" width="1.2" height="1.2" fill="#e000e0"/><rect x="1003.5" y="417" width="1.2" height="1.2" fill="#e000e0"/><rect x="1006.5" y="417" width="1.2" height="1.2" fill="#e000e0"/><rect x="1009.5" y="417" width="1.2" height="1.2" fill="#e000e0"/><rect x="1012.5" y="417" width="1.2" height="1.2" fill="#e000e0"/><rect x="1015.5" y="417" width="1.2" height="1.2" fill="#e000e0"/><rect x="1018.5" y="417" width="1.2" height="1.2" fill="#e000e0"/><rect x="981" y="420" width="1.2" height="1.2" fill="#e000e0"/><rect x="984" y="420" width="1.2" height="1.2" fill="#e000e0"/><rect x="987" y="420" width="1.2" height="1.2" fill="#e000e0"/><rect x="990" y="420" width="1.2" height="1.2" fill="#e000e0"/><rect x="993" y="420" width="1.2" height="1.2" fill="#e000e0"/><rect x="996" y="420" width="1.2" height="1.2" fill="#e000e0"/><rect x="999" y="420" width="1.2" height="1.2" fill="#e000e0"/><rect x="1002" y="420" width="1.2" height="1.2" fill="#e000e0"/><rect x="1005" y="420" width="1.2" height="1.2" fill="#e000e0"/><rect x="1008" y="420" width="1.2" height="1.2" fill="#e000e0"/><rect x="1011" y="420" width="1.2" height="1.2" fill="#e000e0"/><rect x="1014" y="420" width="1.2" height="1.2" fill="#e000e0"/><rect x="1017" y="420" width="1.2" height="1.2" fill="#e000e0"/><rect x="982.5" y="423" width="1.2" height="1.2" fill="#e000e0"/><rect x="985.5" y="423" width="1.2" height="1.2" fill="#e000e0"/><rect x="988.5" y="423" width="1.2" height="1.2" fill="#e000e0"/><rect x="991.5" y="423" width="1.2" height="1.2" fill="#e000e0"/><rect x="994.5" y="423" width="1.2" height="1.2" fill="#e000e0"/><rect x="997.5" y="423" width="1.2" height="1.2" fill="#e000e0"/><rect x="1000.5" y="423" width="1.2" height="1.2" fill="#e000e0"/><rect x="1003.5" y="423" width="1.2" height="1.2" fill="#e000e0"/><rect x="1006.5" y="423" width="1.2" height="1.2" fill="#e000e0"/><rect x="1009.5" y="423" width="1.2" height="1.2" fill="#e000e0"/><rect x="1012.5" y="423" width="1.2" height="1.2" fill="#e000e0"/><rect x="1015.5" y="423" width="1.2" height="1.2" fill="#e000e0"/><rect x="1018.5" y="423" width="1.2" height="1.2" fill="#e000e0"/><rect x="981" y="426" width="1.2" height="1.2" fill="#e000e0"/><rect x="984" y="426" width="1.2" height="1.2" fill="#e000e0"/><rect x="987" y="426" width="1.2" height="1.2" fill="#e000e0"/><rect x="990" y="426" width="1.2" height="1.2" fill="#e000e0"/><rect x="993" y="426" width="1.2" height="1.2" fill="#e000e0"/><rect x="996" y="426" width="1.2" height="1.2" fill="#e000e0"/><rect x="999" y="426" width="1.2" height="1.2" fill="#e000e0"/><rect x="1002" y="426" width="1.2" height="1.2" fill="#e000e0"/><rect x="1005" y="426" width="1.2" height="1.2" fill="#e000e0"/><rect x="1008" y="426" width="1.2" height="1.2" fill="#e000e0"/><rect x="1011" y="426" width="1.2" height="1.2" fill="#e000e0"/><rect x="1014" y="426" width="1.2" height="1.2" fill="#e000e0"/><rect x="1017" y="426" width="1.2" height="1.2" fill="#e000e0"/><rect x="982.5" y="429" width="1.2" height="1.2" fill="#e000e0"/><rect x="985.5" y="429" width="1.2" height="1.2" fill="#e000e0"/><rect x="988.5" y="429" width="1.2" height="1.2" fill="#e000e0"/><rect x="991.5" y="429" width="1.2" height="1.2" fill="#e000e0"/><rect x="994.5" y="429" width="1.2" height="1.2" fill="#e000e0"/><rect x="997.5" y="429" width="1.2" height="1.2" fill="#e000e0"/><rect x="1000.5" y="429" width="1.2" height="1.2" fill="#e000e0"/><rect x="1003.5" y="429" width="1.2" height="1.2" fill="#e000e0"/><rect x="1006.5" y="429" width="1.2" height="1.2" fill="#e000e0"/><rect x="1009.5" y="429" width="1.2" height="1.2" fill="#e000e0"/><rect x="1012.5" y="429" width="1.2" height="1.2" fill="#e000e0"/><rect x="1015.5" y="429" width="1.2" height="1.2" fill="#e000e0"/><rect x="1018.5" y="429" width="1.2" height="1.2" fill="#e000e0"/><rect x="981" y="432" width="1.2" height="1.2" fill="#e000e0"/><rect x="984" y="432" width="1.2" height="1.2" fill="#e000e0"/><rect x="987" y="432" width="1.2" height="1.2" fill="#e000e0"/><rect x="990" y="432" width="1.2" height="1.2" fill="#e000e0"/><rect x="993" y="432" width="1.2" height="1.2" fill="#e000e0"/><rect x="996" y="432" width="1.2" height="1.2" fill="#e000e0"/><rect x="999" y="432" width="1.2" height="1.2" fill="#e000e0"/><rect x="1002" y="432" width="1.2" height="1.2" fill="#e000e0"/><rect x="1005" y="432" width="1.2" height="1.2" fill="#e000e0"/><rect x="1008" y="432" width="1.2" height="1.2" fill="#e000e0"/><rect x="1011" y="432" width="1.2" height="1.2" fill="#e000e0"/><rect x="1014" y="432" width="1.2" height="1.2" fill="#e000e0"/><rect x="1017" y="432" width="1.2" height="1.2" fill="#e000e0"/></g><rect x="980.1" y="413.1" width="39.3" height="20.3" fill="none" stroke="#e000e0" stroke-width="1.3"/><text x="1032.7" y="430.6" font-family="Liberation Sans" font-size="18" font-weight="400" letter-spacing="1.0" fill="#7c7c7c" shape-rendering="geometricPrecision">nwell.net - 8...</text><clipPath id="sc10"><rect x="979.5" y="436.5" width="40.5" height="21.5"/></clipPath><g clip-path="url(#sc10)" shape-rendering="geometricPrecision"><rect x="981" y="438" width="1.2" height="1.2" fill="#208860"/><rect x="984" y="438" width="1.2" height="1.2" fill="#208860"/><rect x="987" y="438" width="1.2" height="1.2" fill="#208860"/><rect x="990" y="438" width="1.2" height="1.2" fill="#208860"/><rect x="993" y="438" width="1.2" height="1.2" fill="#208860"/><rect x="996" y="438" width="1.2" height="1.2" fill="#208860"/><rect x="999" y="438" width="1.2" height="1.2" fill="#208860"/><rect x="1002" y="438" width="1.2" height="1.2" fill="#208860"/><rect x="1005" y="438" width="1.2" height="1.2" fill="#208860"/><rect x="1008" y="438" width="1.2" height="1.2" fill="#208860"/><rect x="1011" y="438" width="1.2" height="1.2" fill="#208860"/><rect x="1014" y="438" width="1.2" height="1.2" fill="#208860"/><rect x="1017" y="438" width="1.2" height="1.2" fill="#208860"/><rect x="982.5" y="441" width="1.2" height="1.2" fill="#208860"/><rect x="985.5" y="441" width="1.2" height="1.2" fill="#208860"/><rect x="988.5" y="441" width="1.2" height="1.2" fill="#208860"/><rect x="991.5" y="441" width="1.2" height="1.2" fill="#208860"/><rect x="994.5" y="441" width="1.2" height="1.2" fill="#208860"/><rect x="997.5" y="441" width="1.2" height="1.2" fill="#208860"/><rect x="1000.5" y="441" width="1.2" height="1.2" fill="#208860"/><rect x="1003.5" y="441" width="1.2" height="1.2" fill="#208860"/><rect x="1006.5" y="441" width="1.2" height="1.2" fill="#208860"/><rect x="1009.5" y="441" width="1.2" height="1.2" fill="#208860"/><rect x="1012.5" y="441" width="1.2" height="1.2" fill="#208860"/><rect x="1015.5" y="441" width="1.2" height="1.2" fill="#208860"/><rect x="1018.5" y="441" width="1.2" height="1.2" fill="#208860"/><rect x="981" y="444" width="1.2" height="1.2" fill="#208860"/><rect x="984" y="444" width="1.2" height="1.2" fill="#208860"/><rect x="987" y="444" width="1.2" height="1.2" fill="#208860"/><rect x="990" y="444" width="1.2" height="1.2" fill="#208860"/><rect x="993" y="444" width="1.2" height="1.2" fill="#208860"/><rect x="996" y="444" width="1.2" height="1.2" fill="#208860"/><rect x="999" y="444" width="1.2" height="1.2" fill="#208860"/><rect x="1002" y="444" width="1.2" height="1.2" fill="#208860"/><rect x="1005" y="444" width="1.2" height="1.2" fill="#208860"/><rect x="1008" y="444" width="1.2" height="1.2" fill="#208860"/><rect x="1011" y="444" width="1.2" height="1.2" fill="#208860"/><rect x="1014" y="444" width="1.2" height="1.2" fill="#208860"/><rect x="1017" y="444" width="1.2" height="1.2" fill="#208860"/><rect x="982.5" y="447" width="1.2" height="1.2" fill="#208860"/><rect x="985.5" y="447" width="1.2" height="1.2" fill="#208860"/><rect x="988.5" y="447" width="1.2" height="1.2" fill="#208860"/><rect x="991.5" y="447" width="1.2" height="1.2" fill="#208860"/><rect x="994.5" y="447" width="1.2" height="1.2" fill="#208860"/><rect x="997.5" y="447" width="1.2" height="1.2" fill="#208860"/><rect x="1000.5" y="447" width="1.2" height="1.2" fill="#208860"/><rect x="1003.5" y="447" width="1.2" height="1.2" fill="#208860"/><rect x="1006.5" y="447" width="1.2" height="1.2" fill="#208860"/><rect x="1009.5" y="447" width="1.2" height="1.2" fill="#208860"/><rect x="1012.5" y="447" width="1.2" height="1.2" fill="#208860"/><rect x="1015.5" y="447" width="1.2" height="1.2" fill="#208860"/><rect x="1018.5" y="447" width="1.2" height="1.2" fill="#208860"/><rect x="981" y="450" width="1.2" height="1.2" fill="#208860"/><rect x="984" y="450" width="1.2" height="1.2" fill="#208860"/><rect x="987" y="450" width="1.2" height="1.2" fill="#208860"/><rect x="990" y="450" width="1.2" height="1.2" fill="#208860"/><rect x="993" y="450" width="1.2" height="1.2" fill="#208860"/><rect x="996" y="450" width="1.2" height="1.2" fill="#208860"/><rect x="999" y="450" width="1.2" height="1.2" fill="#208860"/><rect x="1002" y="450" width="1.2" height="1.2" fill="#208860"/><rect x="1005" y="450" width="1.2" height="1.2" fill="#208860"/><rect x="1008" y="450" width="1.2" height="1.2" fill="#208860"/><rect x="1011" y="450" width="1.2" height="1.2" fill="#208860"/><rect x="1014" y="450" width="1.2" height="1.2" fill="#208860"/><rect x="1017" y="450" width="1.2" height="1.2" fill="#208860"/><rect x="982.5" y="453" width="1.2" height="1.2" fill="#208860"/><rect x="985.5" y="453" width="1.2" height="1.2" fill="#208860"/><rect x="988.5" y="453" width="1.2" height="1.2" fill="#208860"/><rect x="991.5" y="453" width="1.2" height="1.2" fill="#208860"/><rect x="994.5" y="453" width="1.2" height="1.2" fill="#208860"/><rect x="997.5" y="453" width="1.2" height="1.2" fill="#208860"/><rect x="1000.5" y="453" width="1.2" height="1.2" fill="#208860"/><rect x="1003.5" y="453" width="1.2" height="1.2" fill="#208860"/><rect x="1006.5" y="453" width="1.2" height="1.2" fill="#208860"/><rect x="1009.5" y="453" width="1.2" height="1.2" fill="#208860"/><rect x="1012.5" y="453" width="1.2" height="1.2" fill="#208860"/><rect x="1015.5" y="453" width="1.2" height="1.2" fill="#208860"/><rect x="1018.5" y="453" width="1.2" height="1.2" fill="#208860"/><rect x="981" y="456" width="1.2" height="1.2" fill="#208860"/><rect x="984" y="456" width="1.2" height="1.2" fill="#208860"/><rect x="987" y="456" width="1.2" height="1.2" fill="#208860"/><rect x="990" y="456" width="1.2" height="1.2" fill="#208860"/><rect x="993" y="456" width="1.2" height="1.2" fill="#208860"/><rect x="996" y="456" width="1.2" height="1.2" fill="#208860"/><rect x="999" y="456" width="1.2" height="1.2" fill="#208860"/><rect x="1002" y="456" width="1.2" height="1.2" fill="#208860"/><rect x="1005" y="456" width="1.2" height="1.2" fill="#208860"/><rect x="1008" y="456" width="1.2" height="1.2" fill="#208860"/><rect x="1011" y="456" width="1.2" height="1.2" fill="#208860"/><rect x="1014" y="456" width="1.2" height="1.2" fill="#208860"/><rect x="1017" y="456" width="1.2" height="1.2" fill="#208860"/></g><rect x="980.1" y="437.1" width="39.3" height="20.3" fill="none" stroke="#208860" stroke-width="1.3"/><text x="1032.7" y="454.6" font-family="Liberation Sans" font-size="19" font-weight="700" letter-spacing="1.1" fill="#f4f4f4" shape-rendering="geometricPrecision">nwell.pin - ...</text><rect x="979.0" y="460.5" width="41.0" height="21.5" fill="#383898"/><text x="1032.7" y="478.6" font-family="Liberation Sans" font-size="19" font-weight="700" letter-spacing="1.1" fill="#f4f4f4" shape-rendering="geometricPrecision">nwell.label ...</text><clipPath id="sc12"><rect x="979.5" y="484.5" width="40.5" height="21.5"/></clipPath><g clip-path="url(#sc12)" shape-rendering="geometricPrecision"><rect x="981" y="487" width="1.1" height="1.1" fill="#c0f0c0"/><rect x="984" y="487" width="1.1" height="1.1" fill="#c0f0c0"/><rect x="987" y="487" width="1.1" height="1.1" fill="#c0f0c0"/><rect x="990" y="487" width="1.1" height="1.1" fill="#c0f0c0"/><rect x="993" y="487" width="1.1" height="1.1" fill="#c0f0c0"/><rect x="996" y="487" width="1.1" height="1.1" fill="#c0f0c0"/><rect x="999" y="487" width="1.1" height="1.1" fill="#c0f0c0"/><rect x="1002" y="487" width="1.1" height="1.1" fill="#c0f0c0"/><rect x="1005" y="487" width="1.1" height="1.1" fill="#c0f0c0"/><rect x="1008" y="487" width="1.1" height="1.1" fill="#c0f0c0"/><rect x="1011" y="487" width="1.1" height="1.1" fill="#c0f0c0"/><rect x="1014" y="487" width="1.1" height="1.1" fill="#c0f0c0"/><rect x="1017" y="487" width="1.1" height="1.1" fill="#c0f0c0"/><rect x="981" y="491" width="1.1" height="1.1" fill="#c0f0c0"/><rect x="984" y="491" width="1.1" height="1.1" fill="#c0f0c0"/><rect x="987" y="491" width="1.1" height="1.1" fill="#c0f0c0"/><rect x="990" y="491" width="1.1" height="1.1" fill="#c0f0c0"/><rect x="993" y="491" width="1.1" height="1.1" fill="#c0f0c0"/><rect x="996" y="491" width="1.1" height="1.1" fill="#c0f0c0"/><rect x="999" y="491" width="1.1" height="1.1" fill="#c0f0c0"/><rect x="1002" y="491" width="1.1" height="1.1" fill="#c0f0c0"/><rect x="1005" y="491" width="1.1" height="1.1" fill="#c0f0c0"/><rect x="1008" y="491" width="1.1" height="1.1" fill="#c0f0c0"/><rect x="1011" y="491" width="1.1" height="1.1" fill="#c0f0c0"/><rect x="1014" y="491" width="1.1" height="1.1" fill="#c0f0c0"/><rect x="1017" y="491" width="1.1" height="1.1" fill="#c0f0c0"/><rect x="981" y="495" width="1.1" height="1.1" fill="#c0f0c0"/><rect x="984" y="495" width="1.1" height="1.1" fill="#c0f0c0"/><rect x="987" y="495" width="1.1" height="1.1" fill="#c0f0c0"/><rect x="990" y="495" width="1.1" height="1.1" fill="#c0f0c0"/><rect x="993" y="495" width="1.1" height="1.1" fill="#c0f0c0"/><rect x="996" y="495" width="1.1" height="1.1" fill="#c0f0c0"/><rect x="999" y="495" width="1.1" height="1.1" fill="#c0f0c0"/><rect x="1002" y="495" width="1.1" height="1.1" fill="#c0f0c0"/><rect x="1005" y="495" width="1.1" height="1.1" fill="#c0f0c0"/><rect x="1008" y="495" width="1.1" height="1.1" fill="#c0f0c0"/><rect x="1011" y="495" width="1.1" height="1.1" fill="#c0f0c0"/><rect x="1014" y="495" width="1.1" height="1.1" fill="#c0f0c0"/><rect x="1017" y="495" width="1.1" height="1.1" fill="#c0f0c0"/><rect x="981" y="499" width="1.1" height="1.1" fill="#c0f0c0"/><rect x="984" y="499" width="1.1" height="1.1" fill="#c0f0c0"/><rect x="987" y="499" width="1.1" height="1.1" fill="#c0f0c0"/><rect x="990" y="499" width="1.1" height="1.1" fill="#c0f0c0"/><rect x="993" y="499" width="1.1" height="1.1" fill="#c0f0c0"/><rect x="996" y="499" width="1.1" height="1.1" fill="#c0f0c0"/><rect x="999" y="499" width="1.1" height="1.1" fill="#c0f0c0"/><rect x="1002" y="499" width="1.1" height="1.1" fill="#c0f0c0"/><rect x="1005" y="499" width="1.1" height="1.1" fill="#c0f0c0"/><rect x="1008" y="499" width="1.1" height="1.1" fill="#c0f0c0"/><rect x="1011" y="499" width="1.1" height="1.1" fill="#c0f0c0"/><rect x="1014" y="499" width="1.1" height="1.1" fill="#c0f0c0"/><rect x="1017" y="499" width="1.1" height="1.1" fill="#c0f0c0"/><rect x="981" y="503" width="1.1" height="1.1" fill="#c0f0c0"/><rect x="984" y="503" width="1.1" height="1.1" fill="#c0f0c0"/><rect x="987" y="503" width="1.1" height="1.1" fill="#c0f0c0"/><rect x="990" y="503" width="1.1" height="1.1" fill="#c0f0c0"/><rect x="993" y="503" width="1.1" height="1.1" fill="#c0f0c0"/><rect x="996" y="503" width="1.1" height="1.1" fill="#c0f0c0"/><rect x="999" y="503" width="1.1" height="1.1" fill="#c0f0c0"/><rect x="1002" y="503" width="1.1" height="1.1" fill="#c0f0c0"/><rect x="1005" y="503" width="1.1" height="1.1" fill="#c0f0c0"/><rect x="1008" y="503" width="1.1" height="1.1" fill="#c0f0c0"/><rect x="1011" y="503" width="1.1" height="1.1" fill="#c0f0c0"/><rect x="1014" y="503" width="1.1" height="1.1" fill="#c0f0c0"/><rect x="1017" y="503" width="1.1" height="1.1" fill="#c0f0c0"/></g><rect x="980.1" y="485.1" width="39.3" height="20.3" fill="none" stroke="#c0f0c0" stroke-width="1.3"/><text x="1032.7" y="502.6" font-family="Liberation Sans" font-size="19" font-weight="700" letter-spacing="1.1" fill="#f4f4f4" shape-rendering="geometricPrecision">dnwell.dra...</text><clipPath id="sc13"><rect x="979.5" y="508.5" width="40.5" height="21.5"/></clipPath><g clip-path="url(#sc13)" shape-rendering="geometricPrecision"><line x1="983" y1="508.5" x2="983" y2="530.0" stroke="#00d8e8" stroke-width="1.2"/><line x1="989" y1="508.5" x2="989" y2="530.0" stroke="#00d8e8" stroke-width="1.2"/><line x1="995" y1="508.5" x2="995" y2="530.0" stroke="#00d8e8" stroke-width="1.2"/><line x1="1001" y1="508.5" x2="1001" y2="530.0" stroke="#00d8e8" stroke-width="1.2"/><line x1="1007" y1="508.5" x2="1007" y2="530.0" stroke="#00d8e8" stroke-width="1.2"/><line x1="1013" y1="508.5" x2="1013" y2="530.0" stroke="#00d8e8" stroke-width="1.2"/><line x1="1019" y1="508.5" x2="1019" y2="530.0" stroke="#00d8e8" stroke-width="1.2"/><line x1="979.5" y1="512" x2="1020" y2="512" stroke="#00d8e8" stroke-width="1.2"/><line x1="979.5" y1="518" x2="1020" y2="518" stroke="#00d8e8" stroke-width="1.2"/><line x1="979.5" y1="524" x2="1020" y2="524" stroke="#00d8e8" stroke-width="1.2"/></g><rect x="980.1" y="509.1" width="39.3" height="20.3" fill="none" stroke="#00d8e8" stroke-width="1.3"/><text x="1032.7" y="526.6" font-family="Liberation Sans" font-size="18" font-weight="400" letter-spacing="1.0" fill="#7c7c7c" shape-rendering="geometricPrecision">vhvi.drawing ...</text><clipPath id="sc14"><rect x="979.5" y="532.5" width="40.5" height="21.5"/></clipPath><g clip-path="url(#sc14)" shape-rendering="geometricPrecision"><path d="M979.0,533.75 L998.0,552.75 M998.0,533.75 L979.0,552.75" stroke="#00e000" stroke-width="1.1"/><path d="M999.5,533.75 L1018.5,552.75 M1018.5,533.75 L999.5,552.75" stroke="#00e000" stroke-width="1.1"/></g><rect x="980.1" y="533.1" width="39.3" height="20.3" fill="none" stroke="#00e000" stroke-width="1.3"/><text x="1032.7" y="550.6" font-family="Liberation Sans" font-size="19" font-weight="700" letter-spacing="1.1" fill="#f4f4f4" shape-rendering="geometricPrecision">diff.drawing...</text><clipPath id="sc15"><rect x="979.5" y="556.5" width="40.5" height="21.5"/></clipPath><g clip-path="url(#sc15)" shape-rendering="geometricPrecision"></g><rect x="980.1" y="557.1" width="39.3" height="20.3" fill="none" stroke="#00e000" stroke-width="1.3"/><text x="1032.7" y="574.6" font-family="Liberation Sans" font-size="18" font-weight="400" letter-spacing="1.0" fill="#7c7c7c" shape-rendering="geometricPrecision">diff.res - 65/13</text><rect x="979.0" y="580.5" width="41.0" height="21.5" fill="#00f000"/><text x="1032.7" y="598.6" font-family="Liberation Sans" font-size="18" font-weight="400" letter-spacing="1.0" fill="#7c7c7c" shape-rendering="geometricPrecision">diff.cut - 65/14</text><clipPath id="sc17"><rect x="979.5" y="604.5" width="40.5" height="21.5"/></clipPath><g clip-path="url(#sc17)" shape-rendering="geometricPrecision"><rect x="981" y="606" width="1.2" height="1.2" fill="#208860"/><rect x="984" y="606" width="1.2" height="1.2" fill="#208860"/><rect x="987" y="606" width="1.2" height="1.2" fill="#208860"/><rect x="990" y="606" width="1.2" height="1.2" fill="#208860"/><rect x="993" y="606" width="1.2" height="1.2" fill="#208860"/><rect x="996" y="606" width="1.2" height="1.2" fill="#208860"/><rect x="999" y="606" width="1.2" height="1.2" fill="#208860"/><rect x="1002" y="606" width="1.2" height="1.2" fill="#208860"/><rect x="1005" y="606" width="1.2" height="1.2" fill="#208860"/><rect x="1008" y="606" width="1.2" height="1.2" fill="#208860"/><rect x="1011" y="606" width="1.2" height="1.2" fill="#208860"/><rect x="1014" y="606" width="1.2" height="1.2" fill="#208860"/><rect x="1017" y="606" width="1.2" height="1.2" fill="#208860"/><rect x="982.5" y="609" width="1.2" height="1.2" fill="#208860"/><rect x="985.5" y="609" width="1.2" height="1.2" fill="#208860"/><rect x="988.5" y="609" width="1.2" height="1.2" fill="#208860"/><rect x="991.5" y="609" width="1.2" height="1.2" fill="#208860"/><rect x="994.5" y="609" width="1.2" height="1.2" fill="#208860"/><rect x="997.5" y="609" width="1.2" height="1.2" fill="#208860"/><rect x="1000.5" y="609" width="1.2" height="1.2" fill="#208860"/><rect x="1003.5" y="609" width="1.2" height="1.2" fill="#208860"/><rect x="1006.5" y="609" width="1.2" height="1.2" fill="#208860"/><rect x="1009.5" y="609" width="1.2" height="1.2" fill="#208860"/><rect x="1012.5" y="609" width="1.2" height="1.2" fill="#208860"/><rect x="1015.5" y="609" width="1.2" height="1.2" fill="#208860"/><rect x="1018.5" y="609" width="1.2" height="1.2" fill="#208860"/><rect x="981" y="612" width="1.2" height="1.2" fill="#208860"/><rect x="984" y="612" width="1.2" height="1.2" fill="#208860"/><rect x="987" y="612" width="1.2" height="1.2" fill="#208860"/><rect x="990" y="612" width="1.2" height="1.2" fill="#208860"/><rect x="993" y="612" width="1.2" height="1.2" fill="#208860"/><rect x="996" y="612" width="1.2" height="1.2" fill="#208860"/><rect x="999" y="612" width="1.2" height="1.2" fill="#208860"/><rect x="1002" y="612" width="1.2" height="1.2" fill="#208860"/><rect x="1005" y="612" width="1.2" height="1.2" fill="#208860"/><rect x="1008" y="612" width="1.2" height="1.2" fill="#208860"/><rect x="1011" y="612" width="1.2" height="1.2" fill="#208860"/><rect x="1014" y="612" width="1.2" height="1.2" fill="#208860"/><rect x="1017" y="612" width="1.2" height="1.2" fill="#208860"/><rect x="982.5" y="615" width="1.2" height="1.2" fill="#208860"/><rect x="985.5" y="615" width="1.2" height="1.2" fill="#208860"/><rect x="988.5" y="615" width="1.2" height="1.2" fill="#208860"/><rect x="991.5" y="615" width="1.2" height="1.2" fill="#208860"/><rect x="994.5" y="615" width="1.2" height="1.2" fill="#208860"/><rect x="997.5" y="615" width="1.2" height="1.2" fill="#208860"/><rect x="1000.5" y="615" width="1.2" height="1.2" fill="#208860"/><rect x="1003.5" y="615" width="1.2" height="1.2" fill="#208860"/><rect x="1006.5" y="615" width="1.2" height="1.2" fill="#208860"/><rect x="1009.5" y="615" width="1.2" height="1.2" fill="#208860"/><rect x="1012.5" y="615" width="1.2" height="1.2" fill="#208860"/><rect x="1015.5" y="615" width="1.2" height="1.2" fill="#208860"/><rect x="1018.5" y="615" width="1.2" height="1.2" fill="#208860"/><rect x="981" y="618" width="1.2" height="1.2" fill="#208860"/><rect x="984" y="618" width="1.2" height="1.2" fill="#208860"/><rect x="987" y="618" width="1.2" height="1.2" fill="#208860"/><rect x="990" y="618" width="1.2" height="1.2" fill="#208860"/><rect x="993" y="618" width="1.2" height="1.2" fill="#208860"/><rect x="996" y="618" width="1.2" height="1.2" fill="#208860"/><rect x="999" y="618" width="1.2" height="1.2" fill="#208860"/><rect x="1002" y="618" width="1.2" height="1.2" fill="#208860"/><rect x="1005" y="618" width="1.2" height="1.2" fill="#208860"/><rect x="1008" y="618" width="1.2" height="1.2" fill="#208860"/><rect x="1011" y="618" width="1.2" height="1.2" fill="#208860"/><rect x="1014" y="618" width="1.2" height="1.2" fill="#208860"/><rect x="1017" y="618" width="1.2" height="1.2" fill="#208860"/><rect x="982.5" y="621" width="1.2" height="1.2" fill="#208860"/><rect x="985.5" y="621" width="1.2" height="1.2" fill="#208860"/><rect x="988.5" y="621" width="1.2" height="1.2" fill="#208860"/><rect x="991.5" y="621" width="1.2" height="1.2" fill="#208860"/><rect x="994.5" y="621" width="1.2" height="1.2" fill="#208860"/><rect x="997.5" y="621" width="1.2" height="1.2" fill="#208860"/><rect x="1000.5" y="621" width="1.2" height="1.2" fill="#208860"/><rect x="1003.5" y="621" width="1.2" height="1.2" fill="#208860"/><rect x="1006.5" y="621" width="1.2" height="1.2" fill="#208860"/><rect x="1009.5" y="621" width="1.2" height="1.2" fill="#208860"/><rect x="1012.5" y="621" width="1.2" height="1.2" fill="#208860"/><rect x="1015.5" y="621" width="1.2" height="1.2" fill="#208860"/><rect x="1018.5" y="621" width="1.2" height="1.2" fill="#208860"/><rect x="981" y="624" width="1.2" height="1.2" fill="#208860"/><rect x="984" y="624" width="1.2" height="1.2" fill="#208860"/><rect x="987" y="624" width="1.2" height="1.2" fill="#208860"/><rect x="990" y="624" width="1.2" height="1.2" fill="#208860"/><rect x="993" y="624" width="1.2" height="1.2" fill="#208860"/><rect x="996" y="624" width="1.2" height="1.2" fill="#208860"/><rect x="999" y="624" width="1.2" height="1.2" fill="#208860"/><rect x="1002" y="624" width="1.2" height="1.2" fill="#208860"/><rect x="1005" y="624" width="1.2" height="1.2" fill="#208860"/><rect x="1008" y="624" width="1.2" height="1.2" fill="#208860"/><rect x="1011" y="624" width="1.2" height="1.2" fill="#208860"/><rect x="1014" y="624" width="1.2" height="1.2" fill="#208860"/><rect x="1017" y="624" width="1.2" height="1.2" fill="#208860"/></g><rect x="980.1" y="605.1" width="39.3" height="20.3" fill="none" stroke="#208860" stroke-width="1.3"/><text x="1032.7" y="622.6" font-family="Liberation Sans" font-size="18" font-weight="400" letter-spacing="1.0" fill="#7c7c7c" shape-rendering="geometricPrecision">diff.pin - 65/16</text><clipPath id="sc18"><rect x="979.5" y="628.5" width="40.5" height="21.5"/></clipPath><g clip-path="url(#sc18)" shape-rendering="geometricPrecision"><rect x="979.5" y="628.5" width="40.5" height="21.5" fill="#c8ffc8"/><rect x="979.5" y="631.5" width="10" height="13" fill="#000"/><path d="M981.0,633.5 L987.5,642.5 M987.5,633.5 L981.0,642.5" stroke="#fff" stroke-width="2"/></g><text x="1032.7" y="646.6" font-family="Liberation Sans" font-size="18" font-weight="400" letter-spacing="1.0" fill="#7c7c7c" shape-rendering="geometricPrecision">diff.label - 65/6</text></g></svg>
<div class="a" style="left:979px;top:650px;width:199px;height:21.4px;background:#f3f3f3;border:1px solid #cfcfcf"></div>
<div class="a" style="left:979px;top:650px;width:20.5px;height:21.4px;background:#f7f7f7;border:1px solid #d2d2d2"></div>
<div class="a" style="left:999.5px;top:651px;width:9.5px;height:19.4px;background:#e2e2e2;border-right:1px solid #d0d0d0"></div>
<div class="a" style="left:1157.5px;top:650px;width:20.5px;height:21.4px;background:#f7f7f7;border:1px solid #d2d2d2"></div>
<div class="a" style="left:1178px;top:650px;width:20px;height:21.4px;background:#efefef"></div>
<svg style="left:0;top:0" width="1" height="1"><path d="M992,655 L992,666 L986.5,660.5 Z" fill="#666"/><path d="M1165,655 L1165,666 L1170.5,660.5 Z" fill="#666"/></svg>
<div class="a" style="left:979px;top:674.2px;width:33.6px;height:31.4px;background:linear-gradient(#fdfdfd,#f1f1f1);border:1px solid #c8c8c8;border-radius:4px"></div>
<div class="a" style="left:1015px;top:674.2px;width:33.6px;height:31.4px;background:linear-gradient(#fdfdfd,#f1f1f1);border:1px solid #c8c8c8;border-radius:4px"></div>
<div class="a" style="left:1051.5px;top:674.2px;width:33.6px;height:31.4px;background:linear-gradient(#fdfdfd,#f1f1f1);border:1px solid #c8c8c8;border-radius:4px"></div>
<div class="a" style="left:1087.5px;top:674.2px;width:33.6px;height:31.4px;background:linear-gradient(#fdfdfd,#f1f1f1);border:1px solid #c8c8c8;border-radius:4px"></div>
<svg style="left:0;top:0" width="1" height="1">
<path d="M991.5,680 h9 v6 h5 l-9.5,9 l-9.5,-9 h5 z" fill="#000"/><rect x="986" y="697" width="19" height="2.6" fill="#000"/>
<path d="M1027.5,681 h9 v6 h5 l-9.5,9 l-9.5,-9 h5 z" fill="#000"/>
<path d="M1063.5,696 h9 v-6 h5 l-9.5,-9 l-9.5,9 h5 z" fill="#000"/>
<path d="M1099.5,698 h9 v-6 h5 l-9.5,-9 l-9.5,9 h5 z" fill="#000"/><rect x="1094.5" y="678.5" width="19" height="2.6" fill="#000"/>
</svg>
<div class="a" style="left:1079.0px;top:709.6px;width:1.2px;height:1.2px;background:#a8a8a8"></div>
<div class="a" style="left:1083.6px;top:709.6px;width:1.2px;height:1.2px;background:#a8a8a8"></div>
<div class="a" style="left:1088.2px;top:709.6px;width:1.2px;height:1.2px;background:#a8a8a8"></div>
<div class="a" style="left:1092.8px;top:709.6px;width:1.2px;height:1.2px;background:#a8a8a8"></div>
<div class="a" style="left:1097.4px;top:709.6px;width:1.2px;height:1.2px;background:#a8a8a8"></div>
<div class="a" style="left:1102.0px;top:709.6px;width:1.2px;height:1.2px;background:#a8a8a8"></div>
<div class="a" style="left:973.5px;top:530.0px;width:1.3px;height:1.3px;background:#a8a8a8"></div>
<div class="a" style="left:973.5px;top:534.6px;width:1.3px;height:1.3px;background:#a8a8a8"></div>
<div class="a" style="left:973.5px;top:539.2px;width:1.3px;height:1.3px;background:#a8a8a8"></div>
<div class="a" style="left:973.5px;top:543.8px;width:1.3px;height:1.3px;background:#a8a8a8"></div>
<div class="a" style="left:973.5px;top:548.4px;width:1.3px;height:1.3px;background:#a8a8a8"></div>
<div class="a" style="left:973.5px;top:553.0px;width:1.3px;height:1.3px;background:#a8a8a8"></div>
<div class="t" style="left:985.0px;top:719.6px;font-size:19.4px;color:#222;font-weight:400;letter-spacing:0px;">Layer Toolbox</div>
<div class="a" style="left:1159.4px;top:722px;width:16.2px;height:16.2px;border:1.2px solid #8e8e8e;border-radius:3.5px;background:#f0f0f0"></div>
<div class="a" style="left:1181px;top:722px;width:16.2px;height:16.2px;border:1.2px solid #8e8e8e;border-radius:3.5px;background:#f0f0f0"></div>
<svg style="left:1159.4px;top:722px" width="16" height="16" viewBox="0 0 16 16"><rect x="6" y="3.5" width="6.5" height="6.5" rx="1.3" fill="none" stroke="#777" stroke-width="1.2"/><rect x="3.5" y="6" width="6.5" height="6.5" rx="1.3" fill="#f6f6f6" stroke="#777" stroke-width="1.2"/></svg>
<svg style="left:1181px;top:722px" width="16" height="16" viewBox="0 0 16 16"><path d="M4 4 L12 12 M12 4 L4 12" stroke="#6a6a6a" stroke-width="2.4"/></svg>
<div class="a" style="left:978.5px;top:745.5px;width:220px;height:25.3px;background:#318bc8"></div>
<div class="a" style="left:978.5px;top:770.8px;width:220px;height:3.26px;background:#eef1f3;border-top:1.2px solid #a6a6a6"></div>
<div class="a" style="left:980.4px;top:746.8px;width:20px;height:20.7px;background:#fdfdfd;border:1px dotted #a8a8a8"></div>
<div class="t" style="left:1008.4px;top:748.7px;font-size:19.3px;color:#f2f6fa;font-weight:400;letter-spacing:0px;">Color</div>
<div class="a" style="left:978.5px;top:774.06px;width:220px;height:25.3px;background:#318bc8"></div>
<div class="a" style="left:978.5px;top:799.3599999999999px;width:220px;height:3.26px;background:#eef1f3;border-top:1.2px solid #a6a6a6"></div>
<div class="a" style="left:980.4px;top:775.3599999999999px;width:20px;height:20.7px;background:#fdfdfd;border:1px dotted #a8a8a8"></div>
<div class="t" style="left:1008.4px;top:777.2px;font-size:19.3px;color:#f2f6fa;font-weight:400;letter-spacing:0px;">Frame color</div>
<div class="a" style="left:978.5px;top:802.62px;width:220px;height:25.3px;background:#318bc8"></div>
<div class="a" style="left:978.5px;top:827.92px;width:220px;height:3.26px;background:#eef1f3;border-top:1.2px solid #a6a6a6"></div>
<div class="a" style="left:980.4px;top:803.92px;width:20px;height:20.7px;background:#fdfdfd;border:1px dotted #a8a8a8"></div>
<div class="t" style="left:1008.4px;top:805.8px;font-size:19.3px;color:#f2f6fa;font-weight:400;letter-spacing:0px;">Stipple</div>
<div class="a" style="left:978.5px;top:831.18px;width:220px;height:25.3px;background:#318bc8"></div>
<div class="a" style="left:978.5px;top:856.4799999999999px;width:220px;height:3.26px;background:#eef1f3;border-top:1.2px solid #a6a6a6"></div>
<div class="a" style="left:980.4px;top:832.4799999999999px;width:20px;height:20.7px;background:#fdfdfd;border:1px dotted #a8a8a8"></div>
<div class="t" style="left:1008.4px;top:834.3px;font-size:19.3px;color:#f2f6fa;font-weight:400;letter-spacing:0px;">Animation</div>
<div class="a" style="left:978.5px;top:859.74px;width:220px;height:25.3px;background:#318bc8"></div>
<div class="a" style="left:978.5px;top:885.04px;width:220px;height:3.26px;background:#eef1f3;border-top:1.2px solid #a6a6a6"></div>
<div class="a" style="left:980.4px;top:861.04px;width:20px;height:20.7px;background:#fdfdfd;border:1px dotted #a8a8a8"></div>
<div class="t" style="left:1008.4px;top:862.9px;font-size:19.3px;color:#f2f6fa;font-weight:400;letter-spacing:0px;">Style</div>
<div class="a" style="left:978.5px;top:888.3px;width:220px;height:25.3px;background:#318bc8"></div>
<div class="a" style="left:978.5px;top:913.5999999999999px;width:220px;height:3.26px;background:#eef1f3;border-top:1.2px solid #a6a6a6"></div>
<div class="a" style="left:980.4px;top:889.5999999999999px;width:20px;height:20.7px;background:#fdfdfd;border:1px dotted #a8a8a8"></div>
<div class="t" style="left:1008.4px;top:891.5px;font-size:19.3px;color:#f2f6fa;font-weight:400;letter-spacing:0px;">Visibility</div>
<div class="t" style="left:9.5px;top:922.7px;font-size:19px;color:#111;font-weight:700;letter-spacing:0px;">T</div>
<div class="t" style="left:32.0px;top:922.2px;font-size:19.6px;color:#222;font-weight:400;letter-spacing:0px;">sky130A</div>
<div class="t" style="left:204.0px;top:922.7px;font-size:19px;color:#111;font-weight:700;letter-spacing:0px;">G</div>
<div class="t" style="left:814.0px;top:922.3px;font-size:19.5px;color:#111;font-weight:700;letter-spacing:0px;">xy</div>
<div class="t" style="left:888.2px;top:921.8px;font-size:20.1px;color:#222;font-weight:400;letter-spacing:0px;">1586.74294</div>
<div class="t" style="left:1051.5px;top:921.7px;font-size:20.2px;color:#222;font-weight:400;letter-spacing:0px;">-422.65387</div>
<div class="a" style="left:1195.5px;top:930.0px;width:1.4px;height:1.4px;background:#b4b4b4"></div>
<div class="a" style="left:1191.0px;top:934.5px;width:1.4px;height:1.4px;background:#b4b4b4"></div>
<div class="a" style="left:1195.5px;top:934.5px;width:1.4px;height:1.4px;background:#b4b4b4"></div>
<div class="a" style="left:1186.5px;top:939.0px;width:1.4px;height:1.4px;background:#b4b4b4"></div>
<div class="a" style="left:1191.0px;top:939.0px;width:1.4px;height:1.4px;background:#b4b4b4"></div>
<div class="a" style="left:1195.5px;top:939.0px;width:1.4px;height:1.4px;background:#b4b4b4"></div>
<div class="a" style="left:1182.0px;top:943.5px;width:1.4px;height:1.4px;background:#b4b4b4"></div>
<div class="a" style="left:1186.5px;top:943.5px;width:1.4px;height:1.4px;background:#b4b4b4"></div>
<div class="a" style="left:1191.0px;top:943.5px;width:1.4px;height:1.4px;background:#b4b4b4"></div>
<div class="a" style="left:1195.5px;top:943.5px;width:1.4px;height:1.4px;background:#b4b4b4"></div>
<div class="a" style="left:0px;top:48px;width:1px;height:898px;background:#b8b8b8"></div>
</body></html>
